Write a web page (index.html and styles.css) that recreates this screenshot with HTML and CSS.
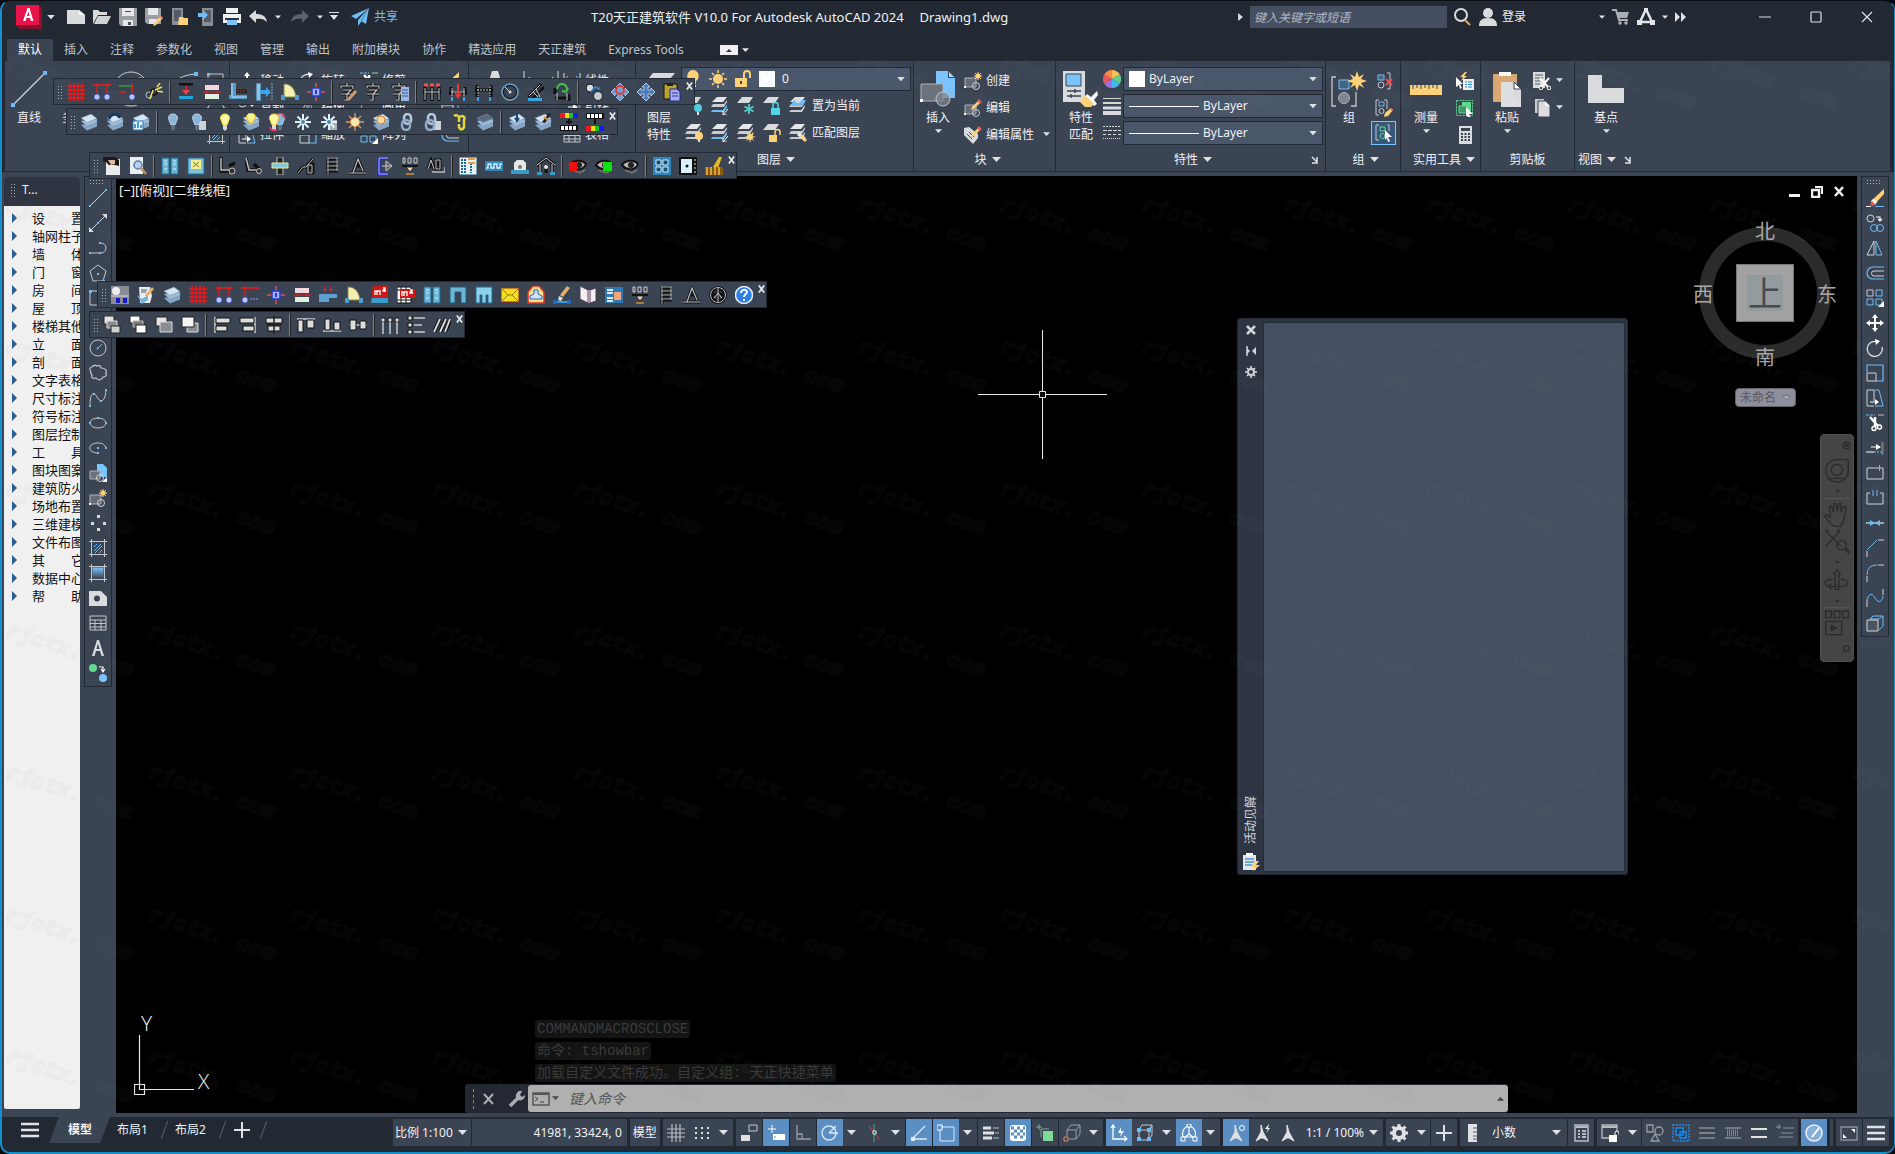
FILE: index.html
```html
<!DOCTYPE html>
<html lang="zh-CN">
<head>
<meta charset="utf-8">
<title>T20天正建筑软件 V10.0 For Autodesk AutoCAD 2024</title>
<link rel="stylesheet" href="styles.css">
</head>
<body>
<svg class="defs" aria-hidden="true">
<defs>
<linearGradient id="gb" x1="0" y1="0" x2="0" y2="1"><stop offset="0" stop-color="#7bc4ff"/><stop offset="1" stop-color="#3b4453"/></linearGradient>
<pattern id="wm" x="0" y="39" width="142" height="142" patternUnits="userSpaceOnUse"><text class="wm-text" x="3" y="28" transform="rotate(18 3 28)">rjctx. com</text></pattern>
</defs>
<!-- generic -->
<symbol id="dn" viewBox="0 0 9 6"><path d="M0 0h9L4.500 5z" fill="#dfe1e4"/></symbol>
<symbol id="x" viewBox="0 0 8 8"><path d="M1 0l6 8M7 0l-6 8" stroke="#e6e8ea" stroke-width="2"/></symbol>
<symbol id="corner" viewBox="0 0 8 8"><path d="M1 1l5 5M6 1v6H1" stroke="#dfe1e4" stroke-width="1.500" fill="none"/></symbol>
<!-- title bar -->
<symbol id="logo" viewBox="0 0 28 26"><path d="M1 1h23l3 3v21H4l-3-4z" fill="#8c0f2c"/><path d="M1 1h23v20H1z" fill="#e8134a"/><path d="M12.500 4L8 17h2.500l1-3h3.500l1 3h2.500L14.500 4zM12 12l1.300-4.500L14.700 12z" fill="#fff"/></symbol>
<symbol id="new" viewBox="0 0 18 18"><path d="M0 2h12l6 5v9H0z" fill="#d9dbdd"/><path d="M12 2v5h6z" fill="#f6f6f6"/></symbol>
<symbol id="open" viewBox="0 0 18 18"><path d="M0 16V2h5l2 2h7v3H5z" fill="#d9dbdd"/><path d="M5 8h13l-4 8H1z" fill="#cfd2d5"/></symbol>
<symbol id="save" viewBox="0 0 18 18"><path d="M0 0h18v18H2l-2-2z" fill="#9b9ea2"/><path d="M3 0h12v8H3zM4 12h10v6H4z" fill="#e6e7e8"/><path d="M9 14h3v3H9zM6 3h6v1H6z" fill="#4b525d"/></symbol>
<symbol id="saveas" viewBox="0 0 18 18"><path d="M0 0h16v16H2l-2-2z" fill="#9b9ea2"/><path d="M3 0h10v7H3zM4 11h8v5H4z" fill="#e6e7e8"/><path d="M16 8l2 2-7 7-3 1 1-3z" fill="#ffd27a"/><path d="M16 8l2 2-1 1-2-2z" fill="#e8585f"/></symbol>
<symbol id="mob1" viewBox="0 0 18 18"><path d="M1 0h11v17H1z" fill="#8a8e94"/><path d="M3 2h7v11H3z" fill="#555c68"/><path d="M8 9h4l1 1h4v7H7z" fill="#ffd27a"/></symbol>
<symbol id="mob2" viewBox="0 0 18 18"><path d="M5 0h11v18H5z" fill="#8a8e94"/><path d="M7 2h7v12H7z" fill="#555c68"/><path d="M1 5h5V2l5 5-5 5V9H1z" fill="#6cbcf7"/></symbol>
<symbol id="print" viewBox="0 0 18 18"><path d="M3 0h12v5H3zM0 6h18v9H0z" fill="#f0f1f2"/><path d="M2 10h14v2H2z" fill="#2b3240"/><path d="M4 12h10v5H4z" fill="#7bc4ff"/></symbol>
<symbol id="undo" viewBox="0 0 18 18"><path d="M0 8l7-6v4c6 0 10 2 11 8-3-3-6-4-11-3v4z" fill="#d9dbdd"/></symbol>
<symbol id="redo" viewBox="0 0 18 18"><path d="M18 8l-7-6v4C5 6 1 8 0 14c3-3 6-4 11-3v4z" fill="#5b626d"/></symbol>
<symbol id="cust" viewBox="0 0 10 10"><path d="M0 0h10v1H0zM1 3h8L5 8z" fill="#dfe1e4"/></symbol>
<symbol id="plane" viewBox="0 0 18 18"><path d="M18 0L0 8l5 3zM18 0l-3 16-5-3zM18 0L7 12v6l3-4z" fill="#6cbcf7"/></symbol>
<symbol id="tri-r" viewBox="0 0 6 10"><path d="M0 0l6 5-6 5z" fill="#dfe1e4"/></symbol>
<symbol id="mag" viewBox="0 0 18 18"><circle cx="7" cy="7" r="6" fill="none" stroke="#d9dbdd" stroke-width="2"/><path d="M11 12l5 5" stroke="#d9a871" stroke-width="2"/></symbol>
<symbol id="user" viewBox="0 0 18 18"><circle cx="9" cy="5" r="5" fill="#d9dbdd"/><path d="M0 18c0-5 2-8 9-8s9 3 9 8z" fill="#d9dbdd"/></symbol>
<symbol id="cart" viewBox="0 0 18 18"><path d="M0 2h4l3 10h9" fill="none" stroke="#aaaeb4" stroke-width="2"/><path d="M4 4h13l-2 6H6z" fill="#aaaeb4"/><circle cx="8" cy="15" r="1.800" fill="#aaaeb4"/><circle cx="14" cy="15" r="1.800" fill="#aaaeb4"/></symbol>
<symbol id="adsk" viewBox="0 0 18 18"><path d="M9 1l6 13H3z" fill="none" stroke="#e4e5e7" stroke-width="2.500"/><path d="M0 12h5v5H0zM13 12h5v5h-5zM7 0h4v4H7z" fill="#e4e5e7"/></symbol>
<symbol id="ff" viewBox="0 0 12 10"><path d="M0 0l5 5-5 5zM6 0l5 5-5 5z" fill="#dfe1e4"/></symbol>
<symbol id="wmin" viewBox="0 0 12 12"><path d="M0 6h12" stroke="#dfe1e4" stroke-width="1.200"/></symbol>
<symbol id="wmax" viewBox="0 0 12 12"><rect x="1" y="1" width="10" height="10" rx="1" fill="none" stroke="#dfe1e4" stroke-width="1.200"/></symbol>
<symbol id="wclose" viewBox="0 0 12 12"><path d="M1 1l10 10M11 1L1 11" stroke="#dfe1e4" stroke-width="1.200"/></symbol>
<symbol id="ribmin" viewBox="0 0 18 10"><path d="M0 0h18v10H0z" fill="#f0f0f0"/><path d="M6 7h6L9 4z" fill="#333"/></symbol>
<!-- ribbon -->
<symbol id="r-line" viewBox="0 0 36 36"><path d="M3 33L33 3" stroke="#d0d3d7" stroke-width="1.300"/><path d="M0 32h4v4H0zM32 0h4v4h-4z" fill="#6cbcf7"/></symbol>
<symbol id="r-pline" viewBox="0 0 36 36"><path d="M2 30h20a10 10 0 0 0 0-20H10" fill="none" stroke="#d0d3d7" stroke-width="1.300"/><path d="M22 8h4v4h-4z" fill="#6cbcf7"/></symbol>
<symbol id="r-circle" viewBox="0 0 36 36"><circle cx="18" cy="18" r="17" fill="none" stroke="#d0d3d7"/><path d="M18 18l9-9M25 7h4v4h-4z" stroke="#6cbcf7" fill="#6cbcf7"/></symbol>
<symbol id="r-arc" viewBox="0 0 36 36"><path d="M2 34Q4 4 32 3" fill="none" stroke="#d0d3d7"/><path d="M30 1h4v4h-4z" fill="#6cbcf7"/></symbol>
<symbol id="rect" viewBox="0 0 18 18"><path d="M1 2h15v14H1z" fill="none" stroke="#c4c8cd"/><path d="M0 1h3v3H0zM15 14h3v3h-3z" fill="#6cbcf7"/></symbol>
<symbol id="hatchS" viewBox="0 0 18 18"><path d="M2.500 0v18M15.500 0v18M0 2.500h18M0 15.500h18" stroke="#c4c8cd"/><path d="M5 8l3-3M5 12l7-7M6 14l7-7M10 14l3-3" stroke="#6cbcf7"/></symbol>
<symbol id="copyS" viewBox="0 0 18 18"><circle cx="4.500" cy="4.500" r="3.500" fill="none" stroke="#d9dbdd"/><circle cx="8" cy="14" r="3.500" fill="none" stroke="#6cbcf7"/><circle cx="14" cy="14" r="3.500" fill="none" stroke="#6cbcf7"/><path d="M10 3h4v4M12 5l2 2 2-2" fill="none" stroke="#fff" stroke-width="1.200"/></symbol>
<symbol id="move" viewBox="0 0 18 18"><path d="M9 1v16M1 9h16" stroke="#fff" stroke-width="2"/><path d="M9 0l3 4H6zM9 18l3-4H6zM0 9l4-3v6zM18 9l-4-3v6z" fill="#fff"/></symbol>
<symbol id="rotate" viewBox="0 0 18 18"><path d="M16 8A7.500 7.500 0 1 1 10 2.500" fill="none" stroke="#e0e2e4" stroke-width="1.300"/><path d="M9 0l5 2-4 4z" fill="#fff"/></symbol>
<symbol id="trim" viewBox="0 0 18 18"><path d="M0 1h9" stroke="#6cbcf7" stroke-dasharray="3 1"/><path d="M12 1h6" stroke="#bbb"/><path d="M4 3l8 9M9 3v9" stroke="#fff" stroke-width="2.500"/><circle cx="8" cy="14.500" r="2" fill="none" stroke="#fff" stroke-width="1.500"/><circle cx="13.500" cy="13" r="2" fill="none" stroke="#fff" stroke-width="1.500"/></symbol>
<symbol id="mirror" viewBox="0 0 18 18"><path d="M8 2v14H1z" fill="none" stroke="#d0d3d7"/><path d="M10 2v14h6z" fill="none" stroke="#6cbcf7"/></symbol>
<symbol id="scale" viewBox="0 0 18 18"><path d="M1 8V1h16v16h-8" fill="none" stroke="#6cbcf7" stroke-width="1.200"/><path d="M1 9h9v8H1z" fill="none" stroke="#d0d3d7"/></symbol>
<symbol id="stretch" viewBox="0 0 18 18"><path d="M8 17H1V1h7v11" fill="none" stroke="#d0d3d7"/><path d="M9 1h4l4 16H9" fill="none" stroke="#6cbcf7"/><path d="M4 13h7" stroke="#fff"/><path d="M9 10l4 3-4 3z" fill="#fff"/></symbol>
<symbol id="array" viewBox="0 0 18 18"><path d="M1 1h6v6H1z" fill="none" stroke="#c4c8cd"/><path d="M10 1h6v6h-6zM1 10h6v6H1zM10 10h6v6h-6z" fill="none" stroke="#6cbcf7"/><path d="M18 12v6h-6z" fill="#fff"/></symbol>
<symbol id="offset" viewBox="0 0 18 18"><path d="M18 3H7a6 6 0 0 0 0 12h11" fill="none" stroke="#6cbcf7" stroke-width="1.200"/><path d="M18 7H8a2 2 0 0 0 0 5h10" fill="none" stroke="#d0d3d7"/></symbol>
<symbol id="erase" viewBox="0 0 18 18"><path d="M18 0v5L9 15l-4-3z" fill="#ffd27a"/><path d="M7 10l4 3-2 3-4-3z" fill="#fff"/><path d="M6 12l3 3-2 2-3-1z" fill="#e8585f"/><path d="M0 17.500h5" stroke="#fff"/><path d="M9 17.500h9" stroke="#6cbcf7"/></symbol>
<symbol id="dim" viewBox="0 0 36 18"><path d="M1 0v18M35 0v18M2 9h32" stroke="#d9dbdd"/><path d="M1 9l6-3v6zM35 9l-6-3v6z" fill="#fff"/></symbol>
<symbol id="dimS" viewBox="0 0 18 18"><path d="M1 1v16M17 1v16" stroke="#d9dbdd"/><path d="M2 7h14M2 7l3-3M2 7l3 3M16 7l-3-3M16 7l-3 3" stroke="#6cbcf7" fill="none"/></symbol>
<symbol id="table" viewBox="0 0 18 18"><path d="M1 2h16v14H1zM1 6h16M1 9.500h16M1 13h16M6 6v10M12 6v10" fill="none" stroke="#c4c8cd"/></symbol>
<symbol id="bigA" viewBox="0 0 24 30"><path d="M0 30L9 0h6l9 30h-5l-2-8H7l-2 8z" fill="#d9dbdd"/></symbol>
<symbol id="lay-big" viewBox="0 0 36 36"><path d="M12 2h22l-10 12H2z" fill="#d9dbdd"/><path d="M2 18h22l8-10" fill="none" stroke="#aeb3ba" stroke-width="3"/><path d="M2 26h22l8-10" fill="none" stroke="#8d939c" stroke-width="3"/></symbol>
<symbol id="bulbY" viewBox="0 0 18 18"><path d="M9 0a6 6 0 0 1 3 11v3H6v-3A6 6 0 0 1 9 0z" fill="#ffd27a"/><path d="M6 15h6v2H6z" fill="#d9dbdd"/></symbol>
<symbol id="sunY" viewBox="0 0 18 18"><circle cx="9" cy="9" r="5" fill="#ffd27a"/><path d="M9 0v3M9 15v3M0 9h3M15 9h3M3 3l2 2M13 13l2 2M15 3l-2 2M5 13l-2 2" stroke="#ffd27a" stroke-width="1.500"/></symbol>
<symbol id="lockY" viewBox="0 0 18 18"><path d="M1 8h12v9H1z" fill="#ffd27a"/><path d="M10 8V4a3 3 0 0 1 6 0v4" fill="none" stroke="#ffd27a" stroke-width="2"/><path d="M7 11v3" stroke="#3b4453" stroke-width="2"/></symbol>
<symbol id="lbase" viewBox="0 0 18 18"><path d="M5 0h11l-4 6H0z" fill="#d9dbdd"/></symbol>
<symbol id="lstack" viewBox="0 0 18 18"><path d="M6 0h10l-4 5H1z" fill="#e4e6e8"/><path d="M2 7h11l3-4v2l-3 5H0z" fill="#c9ccd0"/><path d="M2 13h10l4-5v2l-3 5H0z" fill="#c9ccd0"/></symbol>
<symbol id="l-off" viewBox="0 0 18 18"><use href="#lbase"/><circle cx="13" cy="11" r="4" fill="#4fd0e0"/><path d="M12 15h2v3h-2z" fill="#ddd"/></symbol>
<symbol id="l-iso" viewBox="0 0 18 18"><use href="#lstack"/><path d="M2 13h10l4-5v2l-3 5H0z" fill="#6cbcf7"/><path d="M17 12l-5 6M12 14v4h4" stroke="#fff" fill="none"/></symbol>
<symbol id="l-frz" viewBox="0 0 18 18"><use href="#lbase"/><path d="M12 7v10M7.500 9.500l9 5M16.500 9.500l-9 5" stroke="#4fd0c8" stroke-width="1.800"/></symbol>
<symbol id="l-lock" viewBox="0 0 18 18"><use href="#lbase"/><path d="M8 11h9v7H8z" fill="#55d4e4"/><path d="M10 11V8a2 2 0 0 1 5 0v3" fill="none" stroke="#55d4e4" stroke-width="1.500"/></symbol>
<symbol id="l-cur" viewBox="0 0 18 18"><use href="#lstack"/><path d="M5 3h12l-4 6H1z" fill="#6cbcf7"/><circle cx="9" cy="3" r="3" fill="#d9dbdd"/></symbol>
<symbol id="l-on" viewBox="0 0 18 18"><use href="#lstack"/><circle cx="14" cy="12" r="4" fill="#ffd27a"/><path d="M13 15h2v3h-2z" fill="#ddd"/></symbol>
<symbol id="l-thaw" viewBox="0 0 18 18"><use href="#lstack"/><circle cx="13" cy="13" r="3" fill="#ffd27a"/><path d="M13 8v10M8 13h10M9.500 9.500l7 7M16.500 9.500l-7 7" stroke="#ffd27a"/></symbol>
<symbol id="l-unl" viewBox="0 0 18 18"><use href="#lbase"/><path d="M6 11h8v7H6z" fill="#ffd27a"/><path d="M12 11V8a2 2 0 0 1 5 0v3" fill="none" stroke="#ffd27a" stroke-width="1.500"/></symbol>
<symbol id="l-mat" viewBox="0 0 18 18"><use href="#lstack"/><path d="M10 8l7 6-2 3-7-6z" fill="#e4e6e8"/><path d="M13 11l5 5-2 2-5-5z" fill="#ffd27a"/></symbol>
<symbol id="b-ins" viewBox="0 0 36 36"><path d="M16 0h12l7 7v20H16z" fill="#7bc4ff"/><path d="M28 0v7h7z" fill="#3b4453"/><path d="M29 1l5 5h-5z" fill="#a9daff"/><path d="M1 13h22v17H1z" fill="#6d737d" stroke="#aeb3ba"/><circle cx="23" cy="28" r="7" fill="#7f868f" fill-opacity=".7" stroke="#c4c8cd"/><path d="M0 28h3v3H0z" fill="#fff"/></symbol>
<symbol id="b-cre" viewBox="0 0 18 18"><path d="M1 6h11v9H1z" fill="#656c77" stroke="#aeb3ba"/><circle cx="12" cy="14" r="3.500" fill="none" stroke="#d0d3d7"/><circle cx="14" cy="4" r="2.500" fill="#ffd27a"/><path d="M14 0v8M10 4h8M11 1l6 6M17 1l-6 6" stroke="#ffd27a"/><path d="M0 14h2v2H0z" fill="#fff"/></symbol>
<symbol id="b-edt" viewBox="0 0 18 18"><path d="M1 6h11v9H1z" fill="#656c77" stroke="#aeb3ba"/><circle cx="12" cy="14" r="3.500" fill="none" stroke="#d0d3d7"/><path d="M15 1l2 2-7 7-3 1 1-3z" fill="#ffd27a"/><path d="M15 0l3 3-2 2-3-3z" fill="#e8585f"/><path d="M0 14h2v2H0z" fill="#fff"/></symbol>
<symbol id="b-att" viewBox="0 0 18 18"><path d="M0 2l5-1 9 7v4l-5 6-9-9z" fill="#d9dbdd"/><path d="M3 8l5 5M5 6l5 5" stroke="#3b4453"/><path d="M15 1l2 2-7 7-3 1 1-3z" fill="#ffd27a"/><path d="M15 0l3 3-2 2-3-3z" fill="#e8585f"/></symbol>
<symbol id="p-mat" viewBox="0 0 36 36"><path d="M0 0h22v31H0z" fill="#d9dbdd"/><path d="M3 3h15v12H3z" fill="#7bc4ff" stroke="#3b4453"/><path d="M4 20h14M4 25h14M12 18v4M8 23v4" stroke="#3b4453" stroke-width="1.500"/><path d="M34 20l-6 6-4-3-2 3 9 9 3-2-3-4 4-5z" fill="#fff"/><path d="M22 24l9 9-3 3H22l-5-5z" fill="#ffd27a"/></symbol>
<symbol id="p-col" viewBox="0 0 18 18"><path d="M9 9V0a9 9 0 0 1 7.800 4.500z" fill="#f9c04d"/><path d="M9 9l7.800-4.500a9 9 0 0 1 0 9z" fill="#5fd08f"/><path d="M9 9l7.800 4.500A9 9 0 0 1 9 18z" fill="#46b8e8"/><path d="M9 9v9a9 9 0 0 1-7.800-4.500z" fill="#a06ee0"/><path d="M9 9l-7.800 4.500a9 9 0 0 1 0-9z" fill="#e8585f"/><path d="M9 9L1.200 4.500A9 9 0 0 1 9 0z" fill="#f58a4a"/></symbol>
<symbol id="p-lw" viewBox="0 0 18 18"><path d="M0 1.500h18" stroke="#d9dbdd"/><path d="M0 6h18" stroke="#d9dbdd" stroke-width="2"/><path d="M0 11h18" stroke="#d9dbdd" stroke-width="3"/><path d="M0 16h18" stroke="#d9dbdd" stroke-width="4"/></symbol>
<symbol id="p-lt" viewBox="0 0 18 18"><path d="M0 2.500h18" stroke="#d9dbdd" stroke-dasharray="2 1"/><path d="M0 6.500h18" stroke="#d9dbdd" stroke-dasharray="4 1"/><path d="M0 10.500h18" stroke="#d9dbdd" stroke-dasharray="3 2"/><path d="M0 14.500h18" stroke="#d9dbdd" stroke-dasharray="1 1"/></symbol>
<symbol id="g-big" viewBox="0 0 36 36"><path d="M5 6H1v29h4M20 35h5V21" fill="none" stroke="#c4c8cd" stroke-width="1.300"/><path d="M8 9h10v9H8z" fill="#46647f" stroke="#6cbcf7"/><circle cx="13" cy="27" r="5.500" fill="#7f868f" stroke="#aeb3ba"/><path d="M26 0l2 6 5-3-3 5 6 2-6 2 3 5-5-3-2 6-2-6-5 3 3-5-6-2 6-2-3-5 5 3z" fill="#ffd27a"/></symbol>
<symbol id="g-un" viewBox="0 0 18 18"><path d="M12 1h3v16h-3" fill="none" stroke="#c4c8cd"/><path d="M3 3h6v5H3z" fill="#46647f" stroke="#6cbcf7"/><circle cx="6" cy="13" r="3" fill="none" stroke="#c4c8cd"/><path d="M11 7l6 6M17 7l-6 6" stroke="#f0504f" stroke-width="2"/></symbol>
<symbol id="g-ed" viewBox="0 0 18 18"><path d="M4 1H1v15h3M9 1h3v9" fill="none" stroke="#c4c8cd"/><path d="M4 3h5v4H4z" fill="none" stroke="#6cbcf7"/><circle cx="6.500" cy="12" r="2.500" fill="none" stroke="#c4c8cd"/><path d="M16 9l2 2-5 6-4 1 1-4z" fill="#ffd27a"/><path d="M16 9l2 2-1 1-2-2z" fill="#e8585f"/></symbol>
<symbol id="g-sel" viewBox="0 0 18 18"><path d="M4 1H1v15h3M12 1h2v6" fill="none" stroke="#c4c8cd"/><path d="M5 3h5v4H5z" fill="none" stroke="#62d991"/><circle cx="7.500" cy="12" r="2.500" fill="none" stroke="#62d991"/><path d="M10 6l7 7h-4l2 4-2 1-1-4-2 2z" fill="#fff"/></symbol>
<symbol id="u-meas" viewBox="0 0 36 36"><path d="M2 14h32v10H2z" fill="#ffd27a"/><path d="M5 14v4M9 14v3M13 14v4M17 14v3M21 14v4M25 14v3M29 14v4" stroke="#3b4453"/></symbol>
<symbol id="u-sel" viewBox="0 0 18 18"><path d="M7 7h11v11H7z" fill="#f0f1f2"/><path d="M9 10h2M9 12.500h2M9 15h2M12 10h4M12 12.500h4M12 15h4" stroke="#2b86d0"/><path d="M9 0L4 5h3L5 9l6-5H8l3-4z" fill="#ffd27a"/><path d="M0 5l7 7H4l2 4-2 1-1-4-3 2z" fill="#fff"/></symbol>
<symbol id="u-all" viewBox="0 0 18 18"><path d="M.5 1.500h16v15H.5z" fill="none" stroke="#62d991" stroke-dasharray="2 1"/><path d="M6 3h9v9H6z" fill="#62d991"/><path d="M3 7h8v7H3z" fill="#3a9a60" stroke="#62d991"/><path d="M10 8l7 7h-4l2 3h-3l-2-2z" fill="#fff"/></symbol>
<symbol id="u-calc" viewBox="0 0 18 18"><path d="M3 0h13v18H3z" fill="#d9dbdd"/><path d="M5 2h9v3H5z" fill="#3b4453"/><path d="M5 8h9M5 11h9M5 14h9" stroke="#3b4453" stroke-width="2" stroke-dasharray="2 1.500"/></symbol>
<symbol id="c-paste" viewBox="0 0 36 36"><path d="M4 3h24v28H4z" fill="#d9a871"/><path d="M10 1h12v4H10z" fill="#fff"/><path d="M12 11h13l7 7v18H12z" fill="#dcdee0"/><path d="M25 11v7h7z" fill="#fff" stroke="#3b4453"/></symbol>
<symbol id="c-cut" viewBox="0 0 18 18"><path d="M0 0h12v16H0z" fill="#d9dbdd"/><path d="M2 3h8M2 6h8M2 9h5M2 12h5" stroke="#555c68"/><path d="M7 6l8 9M16 6l-8 9" stroke="#fff" stroke-width="2"/><circle cx="8" cy="16" r="1.800" fill="#3b4453" stroke="#fff"/><circle cx="16" cy="16" r="1.800" fill="#3b4453" stroke="#fff"/></symbol>
<symbol id="c-copy" viewBox="0 0 18 18"><path d="M2 0h9v14H2z" fill="#c9ccd0"/><path d="M5 2h7l5 5v11H5z" fill="#dcdee0" stroke="#3b4453"/><path d="M12 2v5h5z" fill="#fff"/></symbol>
<symbol id="v-base" viewBox="0 0 36 36"><path d="M0 4h14v13h22v15H0z" fill="#d9dbdd"/></symbol>
<!-- draw toolbar -->
<symbol id="d-line" viewBox="0 0 18 18"><path d="M1 17L17 1" stroke="#d0d3d7"/><path d="M0 16h2v2H0zM16 0h2v2h-2z" fill="#6cbcf7"/></symbol>
<symbol id="d-xl" viewBox="0 0 18 18"><path d="M1 17L17 1" stroke="#d0d3d7"/><path d="M0 18v-5l5 5zM18 0v5l-5-5z" fill="#d9dbdd"/><path d="M8 8h2v2H8z" fill="#6cbcf7"/></symbol>
<symbol id="d-pl" viewBox="0 0 18 18"><path d="M1 14h11a4.500 4.500 0 0 0 0-10" fill="none" stroke="#c4c8cd"/><path d="M0 13h2v2H0zM10 13h2v2h-2zM10 3h2v2h-2z" fill="#6cbcf7"/></symbol>
<symbol id="d-poly" viewBox="0 0 18 18"><path d="M9 1l8 6-3 10H4L1 7z" fill="none" stroke="#c4c8cd"/><path d="M8 9h2v2H8zM14 16h2v2h-2z" fill="#6cbcf7"/></symbol>
<symbol id="d-arc" viewBox="0 0 18 18"><path d="M2 17Q2 3 16 2" fill="none" stroke="#c4c8cd"/><path d="M1 16h2v2H1zM15 1h2v2h-2zM5 6h2v2H5z" fill="#6cbcf7"/></symbol>
<symbol id="d-cir" viewBox="0 0 18 18"><circle cx="9" cy="9" r="8" fill="none" stroke="#c4c8cd"/><path d="M9 9l4-4M8 9h1v1H8z" stroke="#6cbcf7"/></symbol>
<symbol id="d-cloud" viewBox="0 0 18 18"><path d="M2 8C0 5 1 3 3 3c1-2 4-2 5-1 2-1 4 0 4 2 4 0 6 2 5 5 1 3-1 4-3 4-1 3-5 4-7 1-3 1-5 0-4-3-1-1-2-2-1-3z" fill="none" stroke="#c4c8cd" stroke-width="1.200"/></symbol>
<symbol id="d-spl" viewBox="0 0 18 18"><path d="M1 16C1 4 5 2 8 8s8 6 9-7" fill="none" stroke="#c4c8cd"/><path d="M0 16h2v2H0zM4 4h2v2H4zM11 11h2v2h-2zM16 0h2v2h-2z" fill="#6cbcf7"/></symbol>
<symbol id="d-ell" viewBox="0 0 18 18"><ellipse cx="9" cy="9" rx="8" ry="5" fill="none" stroke="#c4c8cd"/><path d="M0 8h2v2H0zM16 8h2v2h-2zM8 3h2v2H8z" fill="#6cbcf7"/></symbol>
<symbol id="d-ela" viewBox="0 0 18 18"><path d="M9 14C-2 14-2 4 9 4c5 0 7 2 8 5" fill="none" stroke="#c4c8cd"/><path d="M16 8h2v2h-2zM8 8h2v2H8zM8 13h2v2H8z" fill="#6cbcf7"/></symbol>
<symbol id="d-ins" viewBox="0 0 18 18"><path d="M8 0h6l4 4v9H8z" fill="#7bc4ff"/><path d="M1 7h10v8H1z" fill="#6d737d" stroke="#aeb3ba"/><circle cx="11" cy="14" r="3.500" fill="none" stroke="#d0d3d7"/><path d="M18 13v5h-5z" fill="#fff"/></symbol>
<symbol id="d-pt" viewBox="0 0 18 18"><path d="M8 1h3v3H8zM2 8h3v3H2zM14 8h3v3h-3zM8 14h3v3H8z" fill="#d9dbdd"/></symbol>
<symbol id="d-grad" viewBox="0 0 18 18"><path d="M3.500 3.500h11v11h-11z" fill="url(#gb)"/><path d="M2.500 0v18M15.500 0v18M0 2.500h18M0 15.500h18" stroke="#c4c8cd"/></symbol>
<symbol id="d-reg" viewBox="0 0 18 18"><path d="M0 2h12l6 6v9H0z" fill="#d9dbdd"/><circle cx="8" cy="9.500" r="3" fill="#3b4453"/></symbol>
<symbol id="d-A" viewBox="0 0 18 18"><path d="M3 17L8 1h2l5 16h-2.500l-1.500-5H7l-1.500 5zM7.500 10h3L9 4.500z" fill="#d9dbdd"/></symbol>
<symbol id="d-sel" viewBox="0 0 18 18"><circle cx="4" cy="4" r="4" fill="#62d991"/><circle cx="14" cy="14" r="4" fill="#7bc4ff"/><path d="M10 3h4v4M12 5l2 3 2-3" fill="none" stroke="#fff" stroke-width="1.200"/></symbol>
<!-- modify toolbar -->
<symbol id="m-ext" viewBox="0 0 18 18"><path d="M0 13h8" stroke="#fff"/><path d="M8 13h8" stroke="#6cbcf7" stroke-dasharray="2 1"/><path d="M5 8h7" stroke="#fff"/><path d="M10 5l5 3-5 3z" fill="#fff"/><path d="M16.500 3v13" stroke="#777d87" stroke-width="2"/></symbol>
<symbol id="m-brk1" viewBox="0 0 18 18"><path d="M1 4h16v11H1z" fill="none" stroke="#d0d3d7"/><path d="M13.500 1v6" stroke="#6cbcf7"/></symbol>
<symbol id="m-brk2" viewBox="0 0 18 18"><path d="M4 4H1v11h16V4h-3" fill="none" stroke="#d0d3d7"/><path d="M7 1v6M11 1v6" stroke="#6cbcf7"/></symbol>
<symbol id="m-join" viewBox="0 0 18 18"><path d="M0 9h18" stroke="#fff"/><path d="M4 6l5 3-5 3zM14 6L9 9l5 3z" fill="#6cbcf7"/></symbol>
<symbol id="m-cha" viewBox="0 0 18 18"><path d="M1 18v-6M12 1h6" stroke="#d0d3d7"/><path d="M1 11L11 1" stroke="#6cbcf7"/></symbol>
<symbol id="m-fil" viewBox="0 0 18 18"><path d="M1 18v-6M12 1h6" stroke="#d0d3d7"/><path d="M1 11Q1 1 11 1" fill="none" stroke="#6cbcf7"/></symbol>
<symbol id="m-bld" viewBox="0 0 18 18"><path d="M1 18v-7M17 0v6" stroke="#d0d3d7"/><path d="M1 11c2-8 6-6 8-2s7 6 8-2" fill="none" stroke="#6cbcf7"/></symbol>
<symbol id="m-exp" viewBox="0 0 18 18"><path d="M4 5l3-3h10v10l-4 4M13 5l4-3M13 5H4v0" fill="none" stroke="#6cbcf7"/><path d="M1 6h11v11H1z" fill="#4b535f" stroke="#d9dbdd"/></symbol>
<!-- floating toolbars -->
<symbol id="grid" viewBox="0 0 18 18"><path d="M3 0v18M7 0v18M11 0v18M15 0v18M0 3h18M0 7h18M0 11h18M0 15h18" stroke="#f01818" stroke-width="1.500"/></symbol>
<symbol id="axis" viewBox="0 0 18 18"><path d="M0 2h18M4 0v11M14 0v11" stroke="#f01818" stroke-width="1.300"/><circle cx="4" cy="14" r="3.200" fill="#b8c6ff" stroke="#2a3c8f"/><circle cx="14" cy="14" r="3.200" fill="#b8c6ff" stroke="#2a3c8f"/></symbol>
<symbol id="axis1" viewBox="0 0 18 18"><path d="M0 2h18M4 0v11" stroke="#f01818" stroke-width="1.300"/><circle cx="4" cy="14" r="3.200" fill="#b8c6ff" stroke="#2a3c8f"/><path d="M9 13h9" stroke="#8ea0ff" stroke-dasharray="2 1"/></symbol>
<symbol id="axis2" viewBox="0 0 18 18"><path d="M0 3h14" stroke="#37c037"/><path d="M13 0v11M0 9h7" stroke="#f01818" stroke-width="1.500"/><circle cx="13" cy="14" r="3.200" fill="#b8c6ff" stroke="#2a3c8f"/></symbol>
<symbol id="axis3" viewBox="0 0 18 18"><circle cx="4" cy="12" r="3" fill="none" stroke="#bbb"/><circle cx="9" cy="9" r="3" fill="none" stroke="#111" stroke-width="1.500"/><path d="M5 16l3-9M10 7l7-3M12 4l3-4M12 8l6 1" stroke="#e6e36a" stroke-width="1.500"/></symbol>
<symbol id="w1" viewBox="0 0 18 18"><path d="M2 1h14" stroke="#111" stroke-width="3"/><path d="M9 3v7" stroke="#e02020" stroke-width="2"/><path d="M9 12L5 7h8z" fill="#e04848"/><path d="M2 13h14v3H2z" fill="#1ca8d8"/></symbol>
<symbol id="w2" viewBox="0 0 18 18"><path d="M2 2h14v5H2z" fill="#f4d8e0"/><path d="M2 11h14v5H2z" fill="#dff2df"/><path d="M0 9h18" stroke="#e02020"/><path d="M4 7v4M14 7v4" stroke="#e02020"/></symbol>
<symbol id="w3" viewBox="0 0 18 18"><path d="M2 0h5v15H2zM0 12h18v4H0z" fill="#4f9ccf"/><path d="M7 8h11" stroke="#222" stroke-width="4"/><path d="M3 0v14h15" stroke="#bfe3f8" fill="none"/><path d="M8 8h8" stroke="#e02020" stroke-dasharray="2 1"/></symbol>
<symbol id="w4" viewBox="0 0 18 18"><path d="M1 0h5v18H1z" fill="#8fc5e8" stroke="#265a80"/><path d="M5 7h6V4l5 5-5 5v-3H5z" fill="#39a6ea"/><path d="M17 0v18" stroke="#7fb3d8" stroke-dasharray="2 1"/></symbol>
<symbol id="door" viewBox="0 0 18 18"><path d="M3 1c7 0 11 5 12 13H3z" fill="#f5efb0" stroke="#8c8850"/><path d="M0 12h4v5H0zM14 12h4v5h-4z" fill="#4f9ccf"/></symbol>
<symbol id="col" viewBox="0 0 18 18"><path d="M9 0v18M0 9h18" stroke="#e0524f" stroke-width="1.500"/><path d="M5 5h8v8H5z" fill="#9fb6ff" stroke="#2438c8" stroke-width="1.500"/><path d="M9 7v4" stroke="#2438c8" stroke-width="2"/></symbol>
<symbol id="t-zi" viewBox="0 0 18 18"><path d="M2 5V3h12v3M8 0v3M4 7h8l-4 4v6H5M2 11h12" fill="none" stroke="#111" stroke-width="3"/><path d="M2 5V3h12v3M8 0v3M4 7h8l-4 4v6H5M2 11h12" fill="none" stroke="#c8c8c8" stroke-width="1.200"/></symbol>
<symbol id="t-zi2" viewBox="0 0 18 18"><use href="#t-zi"/><path d="M9 15l7-8 2 2-7 8-3 1z" fill="#d89a6a"/></symbol>
<symbol id="t-zi3" viewBox="0 0 18 18"><use href="#t-zi"/><path d="M10 4h8v14h-8z" fill="#9db8e0"/><path d="M11 7h6M11 10h6M11 13h6" stroke="#345a9a"/></symbol>
<symbol id="dm1" viewBox="0 0 18 18"><path d="M2 3v15M9 3v15M16 3v15M0 9h18" stroke="#0c0c0c" stroke-width="3"/><path d="M2 5v12M9 5v12M16 5v12M2 9h14" stroke="#c8c8c8"/><path d="M1 2h16" stroke="#f05050" stroke-width="3" stroke-dasharray="4 2"/></symbol>
<symbol id="dm2" viewBox="0 0 18 18"><path d="M2 4v8M16 4v8M0 10h18" stroke="#0c0c0c" stroke-width="3"/><path d="M3 5v8M15 5v8M2 9h14" stroke="#c8c8c8"/><path d="M9 1v13M6 10l3 4 3-4" stroke="#e83838" stroke-width="2" fill="none"/><path d="M3 14v4M15 14v4" stroke="#39a6ea" stroke-width="2"/></symbol>
<symbol id="dm3" viewBox="0 0 18 18"><path d="M2 2v12M16 2v12M0 7h18" stroke="#0c0c0c" stroke-width="3"/><path d="M3 3v10M15 3v10M2 7h14" stroke="#c8c8c8" stroke-dasharray="2 1"/><path d="M3 14v4M15 14v4" stroke="#39a6ea" stroke-width="2"/></symbol>
<symbol id="dm4" viewBox="0 0 18 18"><circle cx="9" cy="9" r="8" fill="none" stroke="#6f9fc4" stroke-width="1.500"/><circle cx="9" cy="9" r="6.500" fill="none" stroke="#111"/><path d="M9 9L4 4" stroke="#ddd"/><circle cx="9" cy="9" r="1.500" fill="#ddd"/></symbol>
<symbol id="dm5" viewBox="0 0 18 18"><path d="M1 14L14 1M4 17L17 4" stroke="#111" stroke-width="2.500"/><path d="M2 13L13 2M6 9l5 5M9 6l4 8" stroke="#c8c8c8"/><path d="M1 15h14v3H1z" fill="#39a6ea"/></symbol>
<symbol id="dm6" viewBox="0 0 18 18"><path d="M2 11V5M16 11v7M2 15h14" stroke="#111" stroke-width="3"/><path d="M4 6a5 5 0 1 1 9 3M13 9l-4-1M13 9l2-4" fill="none" stroke="#49c049" stroke-width="2"/><path d="M4 10v7M14 10v7" stroke="#c8c8c8"/></symbol>
<symbol id="ball" viewBox="0 0 18 18"><circle cx="5" cy="5" r="4" fill="#d8dde4" stroke="#111"/><circle cx="13" cy="13" r="4.500" fill="#c3ccd6" stroke="#222"/><path d="M6 9l4-5 5 2" stroke="#3b7fc4" stroke-width="2" fill="none"/></symbol>
<symbol id="mv1" viewBox="0 0 18 18"><path d="M9 0l4 4h-2v3h3V5l4 4-4 4v-2h-3v3h2l-4 4-4-4h2v-3H4v2L0 9l4-4v2h3V4H5z" fill="#6f9fd8" stroke="#cfe0f5" stroke-width=".6"/><circle cx="9" cy="7" r="4" fill="none" stroke="#e03838" stroke-width="2"/></symbol>
<symbol id="mv2" viewBox="0 0 18 18"><path d="M9 0l4 4h-2v3h3V5l4 4-4 4v-2h-3v3h2l-4 4-4-4h2v-3H4v2L0 9l4-4v2h3V4H5z" fill="#4a7fc0" stroke="#cfe0f5" stroke-width=".8"/></symbol>
<symbol id="clip" viewBox="0 0 18 18"><path d="M1 1h13v15H1z" fill="#b7a62a" stroke="#111"/><path d="M4 0h6v3H4z" fill="#222"/><path d="M7 6h7l3 3v9H7z" fill="#a8b0e8" stroke="#20209a"/><path d="M9 10h6M9 13h6" stroke="#3030c0"/></symbol>
<symbol id="ly" viewBox="0 0 18 18"><path d="M1 12l6 5.500 10-4V9z" fill="#86a6c6"/><path d="M1 8l6 5.500 10-4V6z" fill="#9dbbd6" stroke="#6c8aa8" stroke-width=".5"/><path d="M1 5l6 4.500 10-4L11 1z" fill="#d5e4f1" stroke="#6c8aa8" stroke-width=".5"/></symbol>
<symbol id="ly2" viewBox="0 0 18 18"><use href="#ly"/><path d="M3 6c2-6 9-6 11-1" fill="none" stroke="#0d3c66" stroke-width="3"/></symbol>
<symbol id="ly3" viewBox="0 0 18 18"><use href="#ly"/><path d="M1 8h10v9H1z" fill="#e8f3fc" stroke="#1f78c0"/><path d="M3 15v-4M6 15v-6M9 15v-3" stroke="#1f78c0" stroke-width="1.500"/></symbol>
<symbol id="bb" viewBox="0 0 18 18"><path d="M9 1a4 4 0 0 1 4 6l-2 5H7L5 7a4 4 0 0 1 4-6z" fill="#8ab4d8" stroke="#cbdff0" stroke-width=".8"/><path d="M7 12h4v4l-2 2-2-2z" fill="#5b7088"/></symbol>
<symbol id="bb2" viewBox="0 0 18 18"><path d="M9 8h7v9H9z" fill="#cdd2d8"/><use href="#bb" x="-2"/></symbol>
<symbol id="by" viewBox="0 0 18 18"><path d="M9 1a4 4 0 0 1 4 6l-2 5H7L5 7a4 4 0 0 1 4-6z" fill="#fff6a8" stroke="#f0cf3c"/><path d="M7 12h4v4l-2 2-2-2z" fill="#d9d9d9"/></symbol>
<symbol id="by2" viewBox="0 0 18 18"><use href="#ly"/><path d="M9 0a4 4 0 0 1 3 7l-1 3H7L6 7a4 4 0 0 1 3-7z" fill="#fff18a" stroke="#e0b828"/></symbol>
<symbol id="by3" viewBox="0 0 18 18"><use href="#bb" x="3"/><use href="#by" x="-3"/><path d="M9 1c4-2 7 0 7 4M9 17c-4 1-7 0-7-3" stroke="#e83868" stroke-width="2" fill="none"/></symbol>
<symbol id="sn" viewBox="0 0 18 18"><path d="M9 1v16M1 9h16M3.500 3.500l11 11M14.500 3.500l-11 11" stroke="#dff0f8" stroke-width="2"/><circle cx="9" cy="9" r="2" fill="#4a88b0"/></symbol>
<symbol id="sn2" viewBox="0 0 18 18"><path d="M8 7h9v10H8z" fill="#aab2bc"/><use href="#sn"/></symbol>
<symbol id="su" viewBox="0 0 18 18"><path d="M9 0v18M0 9h18M3 3l12 12M15 3L3 15" stroke="#c9a37a" stroke-width="1.300"/><circle cx="9" cy="9" r="4.500" fill="#ffe9b8" stroke="#e8963c"/></symbol>
<symbol id="su2" viewBox="0 0 18 18"><use href="#ly"/><circle cx="9" cy="7" r="4" fill="#ffd9a0" stroke="#d07c28"/></symbol>
<symbol id="lk" viewBox="0 0 18 18"><rect x="6" y="1" width="7" height="10" rx="3.500" fill="none" stroke="#b6cbe0" stroke-width="2.500"/><rect x="4" y="7" width="8" height="10" rx="4" fill="none" stroke="#8faac8" stroke-width="2.500"/></symbol>
<symbol id="lk2" viewBox="0 0 18 18"><path d="M10 8h7v9h-7z" fill="#cdd2d8"/><use href="#lk" x="-2"/></symbol>
<symbol id="lk3" viewBox="0 0 18 18"><path d="M4 3a3 3 0 0 1 5 2v4M9 5c3-4 7-1 5 2v7c-1 3-4 3-5 0v-3" fill="none" stroke="#e2d63c" stroke-width="2.500"/></symbol>
<symbol id="ly4" viewBox="0 0 18 18"><use href="#ly"/><path d="M1 5l6 4.500 10-4L11 1z" fill="#5a6a80"/></symbol>
<symbol id="ly5" viewBox="0 0 18 18"><use href="#ly"/><path d="M9 0v7M7 5l2 3 2-3" stroke="#174a7a" stroke-width="2" fill="none"/></symbol>
<symbol id="ly6" viewBox="0 0 18 18"><use href="#ly"/><path d="M8 9l7-9 2 1-6 9z" fill="#222"/><path d="M10 4l4 3" stroke="#f08c28" stroke-width="2"/></symbol>
<symbol id="pal" viewBox="0 0 18 18"><path d="M0 0h5v5H0z" fill="#f01818"/><path d="M5 0h4v5H5z" fill="#f0e018"/><path d="M9 0h4v5H9z" fill="#18c818"/><path d="M13 0h5v5h-5z" fill="#1818f0"/><path d="M9 6v5M6 9h6" stroke="#111" stroke-width="2"/><path d="M0 12h18v6H0z" fill="#111"/><path d="M1 15h16" stroke="#fff" stroke-width="4" stroke-dasharray="3 1"/></symbol>
<symbol id="pal2" viewBox="0 0 18 18"><path d="M0 0h18v6H0z" fill="#111"/><path d="M1 3h16" stroke="#fff" stroke-width="4" stroke-dasharray="3 1"/><path d="M9 6v5" stroke="#111" stroke-width="2"/><path d="M0 13h5v5H0z" fill="#f01818"/><path d="M5 13h4v5H5z" fill="#f0e018"/><path d="M9 13h4v5H9z" fill="#18c818"/><path d="M13 13h5v5h-5z" fill="#1818f0"/></symbol>
<symbol id="hand" viewBox="0 0 18 18"><path d="M3 2h14v16H3z" fill="#e9e9e9"/><path d="M0 0h12l4 3v6l-4-1H6L3 5 0 4z" fill="#1a1a1a"/><path d="M5 3h7v4l-4 1z" fill="#e0b89c"/></symbol>
<symbol id="pgz" viewBox="0 0 18 18"><path d="M1 0h13v17H1z" fill="#e9eef4"/><circle cx="9" cy="8" r="4" fill="#b7d0ea" stroke="#5a7ca0" stroke-width="1.500"/><path d="M12 11l5 6" stroke="#c09058" stroke-width="2.500"/></symbol>
<symbol id="win" viewBox="0 0 18 18"><path d="M1 1h7v16H1zM10 1h7v16h-7z" fill="#6db6d8" stroke="#1f6a90"/><path d="M3 4h3M3 7h3M12 4h3M12 7h3M3 12h3M12 12h3" stroke="#d6eef8"/></symbol>
<symbol id="winx" viewBox="0 0 18 18"><path d="M1 1h16v16H1z" fill="#7fc0dc" stroke="#1f6a90"/><path d="M4 3h10v9H4z" fill="#f4ef90"/><path d="M6 5l6 5M12 5l-6 5" stroke="#7d7a30"/></symbol>
<symbol id="gl1" viewBox="0 0 18 18"><path d="M2 0v14h8M10 9l6-3" fill="none" stroke="#111" stroke-width="3.500"/><path d="M2 1v12h9" fill="none" stroke="#bdbdbd" stroke-width="1.500"/><circle cx="13" cy="14" r="3" fill="#333" stroke="#bdbdbd"/></symbol>
<symbol id="gl2" viewBox="0 0 18 18"><path d="M1 1l2 12h8M9 7l5 5" fill="none" stroke="#111" stroke-width="3.500"/><path d="M1 1l3 12h7" fill="none" stroke="#bdbdbd" stroke-width="1.500"/><circle cx="14" cy="14" r="2.500" fill="#333" stroke="#bdbdbd"/></symbol>
<symbol id="gl3" viewBox="0 0 18 18"><path d="M6 0h6v18H6z" fill="#222" stroke="#bdbdbd"/><path d="M1 6h16v5H1z" fill="#7fc7d8" stroke="#f0e890"/></symbol>
<symbol id="gl4" viewBox="0 0 18 18"><path d="M1 16l5-6h3l7-8M11 7h5v9h-5zM11 11h5" fill="none" stroke="#111" stroke-width="3"/><path d="M1 16l5-6h3l7-8M11 8h4v8h-4z" fill="none" stroke="#bdbdbd"/></symbol>
<symbol id="gl5" viewBox="0 0 18 18"><path d="M4 2h11M4 6h11M4 10h11M4 14h11M5 1v17" fill="none" stroke="#111" stroke-width="3"/><path d="M4 1h11M4 5h11M4 9h11M4 13h11M5 1v17M14 1v13" fill="none" stroke="#a8a8a8"/></symbol>
<symbol id="gl6" viewBox="0 0 18 18"><path d="M0 16h17M4 16L9 2l5 12M7 9h5" fill="none" stroke="#111" stroke-width="3"/><path d="M0 16h17M4 16L9 2l5 12" fill="none" stroke="#bdbdbd" stroke-width="1.200"/></symbol>
<symbol id="gl7" viewBox="0 0 18 18"><path d="M13 1H4v16h9" fill="none" stroke="#2020d8" stroke-width="3"/><path d="M13 1H4v16h9" fill="none" stroke="#b8c0ff"/><path d="M7 9h9M11 4l6 5-6 5z" fill="#555" stroke="#ccc"/></symbol>
<symbol id="gl8" viewBox="0 0 18 18"><path d="M2 1h2v5H2zM7 1h3v5H7zM13 1h3v5h-3z" fill="none" stroke="#ccc"/><path d="M1 9h16" stroke="#111" stroke-width="2"/><path d="M5 10h8l-4 5z" fill="#e8d8c0" stroke="#222"/><path d="M5 17h8" stroke="#b07838" stroke-width="2"/></symbol>
<symbol id="gl9" viewBox="0 0 18 18"><path d="M1 12l3-9 3 9M2 9h4M9 3h4v9H9zM9 7h5" fill="none" stroke="#111" stroke-width="3"/><path d="M1 12l3-9 3 9M9 3h4v9H9z" fill="none" stroke="#bdbdbd"/><path d="M5 15h13v-5" stroke="#bdbdbd" fill="none" stroke-width="1.500"/></symbol>
<symbol id="bld" viewBox="0 0 18 18"><path d="M0 0h18v18H0z" fill="#e8f0f4" stroke="#14486c"/><path d="M3 2v14M6 2v14M12 6v10" stroke="#1f6a90" stroke-width="2" stroke-dasharray="2 1"/><path d="M9 2h7M9 6h7" stroke="#d8a048" stroke-width="2"/></symbol>
<symbol id="brick" viewBox="0 0 18 18"><path d="M0 4h18v10H0z" fill="#2f86b8"/><path d="M1 11h2V7h3v4h3V7h3v4h3V7h2" stroke="#e4f4fc" fill="none" stroke-width="1.300"/></symbol>
<symbol id="arch" viewBox="0 0 18 18"><path d="M3 13V6l3-3h6l3 3v7z" fill="#e8e8e8"/><circle cx="9" cy="10" r="2" fill="#777"/><path d="M0 13h18v4H0z" fill="#3a9ac8"/></symbol>
<symbol id="house" viewBox="0 0 18 18"><path d="M0 8l9-7 9 7M3 7v11M15 7v11M9 8v8" stroke="#111" fill="none" stroke-width="3"/><path d="M0 8l9-7 9 7M3 7v11M15 7v11" stroke="#d0d0d0" fill="none"/><path d="M0 15h5v3H0zM13 15h5v3h-5z" fill="#3a9ac8"/><circle cx="9" cy="10" r="2" fill="#e8e8e8"/></symbol>
<symbol id="eye" viewBox="0 0 18 18"><path d="M1 8c3-5 12-6 16-1-2 5-10 8-15 2z" fill="#b8b8b8" stroke="#111" stroke-width="2"/><circle cx="10" cy="8" r="3" fill="#222"/><path d="M4 13l7 3 5-3" fill="none" stroke="#777" stroke-width="1.500"/></symbol>
<symbol id="eyeR" viewBox="0 0 18 18"><use href="#eye"/><path d="M0 5h8v9H0z" fill="#f01010"/></symbol>
<symbol id="eyeG" viewBox="0 0 18 18"><use href="#eye"/><path d="M8 5h9v9H8z" fill="#10e010"/></symbol>
<symbol id="ff4" viewBox="0 0 18 18"><path d="M0 0h18v18H0z" fill="#2f86b8"/><path d="M3 3h5v5H3zM10 3h5v5h-5zM3 10h5v5H3zM10 10h5v5h-5z" fill="#155078" stroke="#d6eef8"/></symbol>
<symbol id="note" viewBox="0 0 18 18"><path d="M0 0h18v18H0z" fill="#111"/><path d="M2 2h11v14H2z" fill="#d8f0ff"/><circle cx="8" cy="9" r="1.500" fill="#111"/><path d="M15 3h2M15 7h2M15 11h2M15 15h2" stroke="#ddd"/></symbol>
<symbol id="broom" viewBox="0 0 18 18"><path d="M8 10l6-10h3l-4 11z" fill="#e8b820"/><path d="M0 10h18v8H0z" fill="#8a5a10"/><path d="M2 10v8M6 10v8M10 10v8M14 10v8" stroke="#f0c040" stroke-width="1.500"/></symbol>
<symbol id="man" viewBox="0 0 18 18"><path d="M0 0h18v18H0z" fill="#8a8d92"/><circle cx="5" cy="5" r="4" fill="#f0f0f0"/><path d="M0 10h18" stroke="#ddd"/><path d="M5 12h4v5H5zM12 12h4v5h-4z" fill="#1818c8"/></symbol>
<symbol id="wr" viewBox="0 0 18 18"><path d="M2 1h11l2 9-2 7H3z" fill="#e8ecf0"/><path d="M0 9l5 4 6-4v5l-6 4z" fill="#6fb4dc"/><path d="M8 9l7-8 2 2-7 8z" fill="#e8b060"/><path d="M4 4h6M4 6h5" stroke="#555"/></symbol>
<symbol id="drop" viewBox="0 0 18 18"><path d="M0 8h18v4h-8v4H0z" fill="#5aa0d0"/><path d="M6 0v4M12 0v4" stroke="#e02020"/><path d="M4 3l2 3 2-3zM10 3l2 3 2-3z" fill="#e02020"/></symbol>
<symbol id="m2" viewBox="0 0 18 18"><path d="M3 0h14v12H1V4z" fill="#d01818"/><path d="M4 9V5h2v4M6 5h3v4M12 2h2v2h-2v1h3" fill="none" stroke="#fff" stroke-width="1.300"/><path d="M1 12h16v5H0z" fill="#3a9ac8"/></symbol>
<symbol id="m2b" viewBox="0 0 18 18"><path d="M0 1h14v16H0z" fill="#fff" stroke="#111"/><path d="M0 4h14M0 14h14M4 1v16M9 1v16" stroke="#111"/><path d="M3 3h15v9H3z" fill="#d01818"/><path d="M5 10V6h2v4M7 6h3v4M13 4h2v2h-2v1h3" fill="none" stroke="#fff" stroke-width="1.300"/></symbol>
<symbol id="st1" viewBox="0 0 18 18"><path d="M1 1h16v16h-5V6H6v11H1z" fill="#6db6d8" stroke="#1f5a80"/></symbol>
<symbol id="st2" viewBox="0 0 18 18"><path d="M1 1h16v16h-4V9h-2v8H7V9H5v8H1z" fill="#8cd0ec" stroke="#1f6a90"/></symbol>
<symbol id="roof" viewBox="0 0 18 18"><path d="M0 2h18v14H0z" fill="#f0e020" stroke="#a01818"/><path d="M0 2l7 7h4l7-7M0 16l7-7M18 16l-7-7" stroke="#a07810" fill="none"/></symbol>
<symbol id="stamp" viewBox="0 0 18 18"><path d="M1 17V6l5-6h6l5 6v11z" fill="#f4e090" stroke="#e03020" stroke-width="1.500"/><path d="M7 4h4v4l4 2v3H3v-3l4-2z" fill="#d0e4fa" stroke="#2f66b8"/></symbol>
<symbol id="pen" viewBox="0 0 18 18"><path d="M7 9l7-9 3 2-7 9z" fill="#e0b070"/><path d="M6 10l4 2-2 3-3-1z" fill="#ddd"/><path d="M1 16h15" stroke="#3a9ae0" stroke-width="2"/><path d="M0 14h4v4H0zM14 14h4v4h-4z" fill="#2468c0"/></symbol>
<symbol id="book" viewBox="0 0 18 18"><path d="M1 0l8 4v13L1 13zM17 2l-6 2v13l6-2z" fill="#f4f0f4" stroke="#504050"/><path d="M9 4h2v13H9z" fill="#b090a8"/></symbol>
<symbol id="form" viewBox="0 0 18 18"><path d="M0 1h18v16H0z" fill="#2f78b8"/><path d="M2 4h6M2 7h6M2 12h6M2 15h6" stroke="#d8ecfa" stroke-width="2"/><path d="M9 6h7v8H9z" fill="#f0a878"/></symbol>
<symbol id="comp" viewBox="0 0 18 18"><circle cx="9" cy="9" r="7" fill="none" stroke="#111" stroke-width="4"/><circle cx="9" cy="9" r="7.500" fill="none" stroke="#bdbdbd"/><path d="M9 2v14M3 10l6-3 6 3" stroke="#111" stroke-width="3" fill="none"/><path d="M9 2v14M5 12l4-5 4 5" stroke="#c8c8c8" fill="none"/></symbol>
<symbol id="help" viewBox="0 0 18 18"><circle cx="9" cy="9" r="8.500" fill="#2d7fe8" stroke="#e8eef6" stroke-width="1.500"/><path d="M6 7c0-4 6-4 6-1 0 2-3 2-3 5M9 13v2" fill="none" stroke="#fff" stroke-width="2"/></symbol>
<symbol id="o1" viewBox="0 0 18 18"><path d="M1 0h10v8H1z" fill="#e4e4e4" stroke="#222"/><path d="M4 5h10v7H4z" fill="#8a8d92" stroke="#ddd"/><path d="M8 10h9v7H8z" fill="#d0d0d0" stroke="#222"/></symbol>
<symbol id="o2" viewBox="0 0 18 18"><path d="M1 0h10v7H1z" fill="#fff" stroke="#222"/><path d="M4 5h10v6H4z" fill="#777" stroke="#bbb"/><path d="M7 9h10v8H7z" fill="#fff" stroke="#222"/></symbol>
<symbol id="o3" viewBox="0 0 18 18"><path d="M1 1h11v9H1z" fill="#e4e4e4" stroke="#222"/><path d="M5 6h12v10H5z" fill="#8a8d92" stroke="#ddd"/></symbol>
<symbol id="o4" viewBox="0 0 18 18"><path d="M6 7h11v9H6z" fill="#8a8d92" stroke="#ddd"/><path d="M1 1h12v10H1z" fill="#f4f4f4" stroke="#222"/></symbol>
<symbol id="al1" viewBox="0 0 18 18"><path d="M2 1v16" stroke="#ccc" stroke-width="1.500"/><path d="M3 2h14v5H3zM3 10h11v5H3z" fill="#ddd" stroke="#111"/></symbol>
<symbol id="al2" viewBox="0 0 18 18"><path d="M16 1v16" stroke="#ccc" stroke-width="1.500"/><path d="M1 2h14v5H1zM4 10h11v5H4z" fill="#ddd" stroke="#111"/></symbol>
<symbol id="al3" viewBox="0 0 18 18"><path d="M1 2h16v5H1zM3 10h12v5H3z" fill="#ddd" stroke="#111"/><path d="M9 0v18M1 8.500h16" stroke="#222" stroke-width="1.500"/></symbol>
<symbol id="al4" viewBox="0 0 18 18"><path d="M0 3h18" stroke="#ccc" stroke-width="1.500"/><path d="M1 4h5v12H1zM10 4h7v8h-7z" fill="#ddd" stroke="#111"/></symbol>
<symbol id="al5" viewBox="0 0 18 18"><path d="M0 15h18" stroke="#ccc" stroke-width="1.500"/><path d="M2 3h5v11H2zM11 6h6v8h-6z" fill="#ddd" stroke="#111"/></symbol>
<symbol id="al6" viewBox="0 0 18 18"><path d="M0 9h18" stroke="#ccc" stroke-width="1.500"/><path d="M1 4h6v10H1zM11 5h6v8h-6z" fill="#ddd" stroke="#111"/></symbol>
<symbol id="al7" viewBox="0 0 18 18"><path d="M0 2h4v4H0zM7 2h4v4H7zM14 2h4v4h-4z" fill="#ddd" stroke="#111"/><path d="M2 6v12M9 6v12M16 6v12" stroke="#ccc" stroke-width="1.500"/></symbol>
<symbol id="al8" viewBox="0 0 18 18"><path d="M1 0h4v4H1zM1 7h4v4H1zM1 14h4v4H1z" fill="#ddd" stroke="#111"/><path d="M7 2h11M7 9h8M7 16h11" stroke="#ccc" stroke-width="1.500"/></symbol>
<symbol id="al9" viewBox="0 0 18 18"><path d="M1 16L7 3M7 16l6-13M12 16l6-13" stroke="#111" stroke-width="4"/><path d="M1 16L7 3M7 16l6-13M12 16l5-13" stroke="#ddd" stroke-width="1.800"/></symbol>
<!-- status bar -->
<symbol id="s-menu" viewBox="0 0 18 18"><path d="M0 3h18M0 9h18M0 15h18" stroke="#dfe1e4" stroke-width="2.500"/></symbol>
<symbol id="s-plus" viewBox="0 0 18 18"><path d="M9 1v16M1 9h16" stroke="#dfe1e4" stroke-width="2"/></symbol>
<symbol id="s-grid" viewBox="0 0 18 18"><path d="M5 0v18M13 0v18M9 0v18M0 5h18M0 9h18M0 13h18" stroke="#b8bcc2" stroke-width="1.200"/></symbol>
<symbol id="s-snap" viewBox="0 0 18 18"><path d="M2 4h14M2 9h14M2 14h14" stroke="#dfe1e4" stroke-width="2" stroke-dasharray="2 4"/></symbol>
<symbol id="s-inf" viewBox="0 0 18 18"><path d="M9 8V1h8v6H9" fill="none" stroke="#c4c8cd"/><path d="M1 11h9v6H1z" fill="#dfe1e4"/></symbol>
<symbol id="s-dyn" viewBox="0 0 18 18"><path d="M5 1v8M1 5h8" stroke="#fff"/><path d="M6 10h12v6H6z" fill="#fff"/><path d="M8 12v2" stroke="#5b8fc4"/></symbol>
<symbol id="s-ort" viewBox="0 0 18 18"><path d="M3 1v14h14M3 10h5v5" fill="none" stroke="#9a9fa7" stroke-width="1.300"/></symbol>
<symbol id="s-pol" viewBox="0 0 18 18"><circle cx="8" cy="9" r="7" fill="none" stroke="#dfe9f4" stroke-width="1.300"/><path d="M8 9l7-7M8 9h9" stroke="#dfe9f4" stroke-width="1.300"/></symbol>
<symbol id="s-iso" viewBox="0 0 18 18"><path d="M4 2l10 13" stroke="#c05050"/><path d="M9 0v18" stroke="#3fae6c"/><path d="M8 7h3v3H8z" fill="#3b4453" stroke="#eee"/></symbol>
<symbol id="s-otr" viewBox="0 0 18 18"><path d="M15 2L2 15h15" fill="none" stroke="#dfe9f4" stroke-width="1.300"/><path d="M1 13h4v4H1z" fill="#dfe9f4"/></symbol>
<symbol id="s-osn" viewBox="0 0 18 18"><path d="M3 3h14v14H3z" fill="none" stroke="#dfe9f4"/><path d="M0 1h5v5H0z" fill="#5b8fc4" stroke="#fff"/></symbol>
<symbol id="s-lw" viewBox="0 0 18 18"><path d="M1 4h8M1 9h11M1 14h9" stroke="#dfe1e4" stroke-width="3"/><path d="M11 4h6M13 9h4M11 14h6" stroke="#b8bcc2"/></symbol>
<symbol id="s-tr" viewBox="0 0 18 18"><rect x="1" y="1" width="16" height="16" rx="3" fill="#fff"/><path d="M2 4h14M2 10h14" stroke="#5b8fc4" stroke-width="3" stroke-dasharray="3 3"/><path d="M5 7h12M5 13h12" stroke="#5b8fc4" stroke-width="3" stroke-dasharray="3 3"/></symbol>
<symbol id="s-sc" viewBox="0 0 18 18"><path d="M7 7h10v10H7z" fill="#7edb9c"/><path d="M5 13V5h8M3 0v6M0 3h6" fill="none" stroke="#7edb9c" stroke-opacity=".7"/></symbol>
<symbol id="s-3d" viewBox="0 0 18 18"><path d="M4 6h9v9H6M4 6v6M4 6l4-5h9v9l-4 5M13 6l4-5" fill="none" stroke="#9a9fa7"/><path d="M1 13h4v4H1z" fill="none" stroke="#e09068"/></symbol>
<symbol id="s-ucs" viewBox="0 0 18 18"><path d="M3 1v14h14M1 4l2-3 2 3M14 12l3 3-3 2" fill="none" stroke="#fff" stroke-width="1.300"/><path d="M11 3l-3 6h3l-1 4 4-6h-3z" fill="#fff"/></symbol>
<symbol id="s-fil" viewBox="0 0 18 18"><path d="M3 6h10v10H3zM3 6l3-5h10l-3 5M16 1v10l-3 5" fill="none" stroke="#c4c8cd"/><path d="M1 4h4v4H1zM11 4h4v4h-4zM1 13h4v4H1zM11 13h4v4h-4z" fill="#6cbcf7"/></symbol>
<symbol id="s-giz" viewBox="0 0 18 18"><path d="M9 2a8 8 0 0 1 6 11H3A8 8 0 0 1 9 2v8l-6 5M9 10l6 5" fill="none" stroke="#fff" stroke-width="1.200"/><path d="M7 0h4v3H7zM1 13h4v4H1zM13 13h4v4h-4z" fill="#5b8fc4" stroke="#fff"/></symbol>
<symbol id="s-an" viewBox="0 0 18 18"><path d="M8 1l2 7 5 9-5-3-2 0-5 3 5-9z" fill="#dfe1e4" stroke="#dfe1e4"/></symbol>
<symbol id="s-an1" viewBox="0 0 18 18"><use href="#s-an"/><circle cx="15" cy="4" r="2.500" fill="none" stroke="#fff"/></symbol>
<symbol id="s-an2" viewBox="0 0 18 18"><use href="#s-an"/><path d="M16 0l-4 5h3l-2 4 4-5h-2z" fill="#fff"/></symbol>
<symbol id="s-gear" viewBox="0 0 18 18"><circle cx="9" cy="9" r="5" fill="none" stroke="#dfe1e4" stroke-width="4"/><path d="M9 0v3M9 15v3M0 9h3M15 9h3M2.500 2.500l2 2M13.500 13.500l2 2M15.500 2.500l-2 2M4.500 13.500l-2 2" stroke="#dfe1e4" stroke-width="3"/></symbol>
<symbol id="s-rul" viewBox="0 0 18 18"><path d="M4 0h9v18H4z" fill="#dfe1e4"/><path d="M9 4h4M9 8h4M9 12h4M9 15h4" stroke="#555c68"/></symbol>
<symbol id="s-qp" viewBox="0 0 18 18"><path d="M3 1h13v16H3z" fill="none" stroke="#b8bcc2" stroke-width="1.500"/><path d="M4 3h11" stroke="#b8bcc2" stroke-width="2"/><path d="M6 7h2M6 10h2M6 13h2M10 7h4M10 10h4M10 13h4" stroke="#dfe1e4" stroke-width="1.300"/></symbol>
<symbol id="s-lk" viewBox="0 0 18 18"><path d="M8 14H1V1h15v6" fill="none" stroke="#b8bcc2" stroke-width="1.300"/><path d="M1 3h15" stroke="#b8bcc2" stroke-width="2"/><path d="M8 11h8v7H8z" fill="#fff"/><path d="M14 11V9a2 2 0 0 1 4 0v2" stroke="#fff" fill="none"/></symbol>
<symbol id="s-shp" viewBox="0 0 18 18"><path d="M1 1h6v7H1zM9 10l4 7H5z" fill="none" stroke="#9a9fa7" stroke-width="1.300"/><circle cx="13" cy="7" r="4" fill="none" stroke="#9a9fa7" stroke-width="1.300"/></symbol>
<symbol id="s-box" viewBox="0 0 18 18"><path d="M1 1h16v16H1z" fill="none" stroke="#1e88e5" stroke-width="1.500" stroke-dasharray="2 1"/><path d="M4 4h7v7H4zM8 8h6v6H8z" fill="#15406a" stroke="#1e88e5" stroke-width="1.500"/></symbol>
<symbol id="s-l1" viewBox="0 0 18 18"><path d="M1 4h16M1 14h16" stroke="#a8adb4"/><path d="M1 9h16" stroke="#7d838c" stroke-width="2"/></symbol>
<symbol id="s-l2" viewBox="0 0 18 18"><path d="M1 4h16M1 14h16" stroke="#a8adb4"/><path d="M3 9h12" stroke="#7d838c" stroke-width="7" stroke-dasharray="1 1"/></symbol>
<symbol id="s-l3" viewBox="0 0 18 18"><path d="M1 5h16M1 13h16" stroke="#dfe1e4" stroke-width="2"/></symbol>
<symbol id="s-l4" viewBox="0 0 18 18"><path d="M7 4h11M5 9h12M3 13h14M0 3h5M3 0v5" stroke="#8d939c"/></symbol>
<symbol id="s-perf" viewBox="0 0 18 18"><circle cx="9" cy="9" r="8" fill="#87afd8" stroke="#e8eff8" stroke-width="1.500"/><path d="M7 13l7-9" stroke="#fff" stroke-width="2"/></symbol>
<symbol id="s-full" viewBox="0 0 18 18"><path d="M1 3h16v13H1z" fill="none" stroke="#8d939c" stroke-width="1.300"/><path d="M11 5h4v4zM3 10v4h4z" fill="#fff"/></symbol>
</svg>

<div class="window">
<header class="titlebar">
  <div class="quick">
    <button><svg class="w28"><use href="#logo"/></svg></button><button class="caret"><svg><use href="#dn"/></svg></button>
    <button><svg><use href="#new"/></svg></button><button><svg><use href="#open"/></svg></button><button><svg><use href="#save"/></svg></button><button><svg><use href="#saveas"/></svg></button><button><svg><use href="#mob1"/></svg></button><button><svg><use href="#mob2"/></svg></button><button><svg><use href="#print"/></svg></button><button><svg><use href="#undo"/></svg></button><button class="caret small"><svg><use href="#dn"/></svg></button><button><svg><use href="#redo"/></svg></button><button class="caret small"><svg><use href="#dn"/></svg></button><button class="caret"><svg class="cust"><use href="#cust"/></svg></button>
    <button class="share"><svg><use href="#plane"/></svg>共享</button>
  </div>
  <h1 class="title"><span>T20天正建筑软件 V10.0 For Autodesk AutoCAD 2024</span><span>Drawing1.dwg</span></h1>
  <div class="account">
    <svg class="tri"><use href="#tri-r"/></svg>
    <input class="search" type="text" placeholder="键入关键字或短语" aria-label="搜索">
    <button><svg><use href="#mag"/></svg></button>
    <button class="login"><svg><use href="#user"/></svg>登录</button>
    <button class="caret small"><svg><use href="#dn"/></svg></button>
    <button><svg><use href="#cart"/></svg></button><button><svg><use href="#adsk"/></svg></button><button class="caret small"><svg><use href="#dn"/></svg></button><button><svg class="ff"><use href="#ff"/></svg></button>
  </div>
  <div class="wbtns"><button><svg><use href="#wmin"/></svg></button><button><svg><use href="#wmax"/></svg></button><button><svg><use href="#wclose"/></svg></button></div>
</header>

<nav class="tabs">
  <a href="#" class="on">默认</a><a href="#">插入</a><a href="#">注释</a><a href="#">参数化</a><a href="#">视图</a><a href="#">管理</a><a href="#">输出</a><a href="#">附加模块</a><a href="#">协作</a><a href="#">精选应用</a><a href="#">天正建筑</a><a href="#">Express Tools</a>
  <button class="ribmin"><svg class="rm"><use href="#ribmin"/></svg><svg class="sm"><use href="#dn"/></svg></button>
</nav>

<section class="ribbon">
  <div class="panel p-draw">
    <div class="body">
      <button class="big"><svg><use href="#r-line"/></svg>直线</button>
      <button class="big"><svg><use href="#r-pline"/></svg>多段线</button>
      <button class="big"><svg><use href="#r-circle"/></svg>圆</button>
      <button class="big"><svg><use href="#r-arc"/></svg>圆弧</button>
      <div class="rows"><button><svg><use href="#rect"/></svg></button><button><svg><use href="#d-ell"/></svg></button><button><svg><use href="#hatchS"/></svg></button></div>
    </div>
    <div class="name">绘图 <svg><use href="#dn"/></svg></div>
  </div>
  <div class="panel p-mod">
    <div class="body">
      <div class="rows"><button><svg><use href="#move"/></svg>移动</button><button><svg><use href="#copyS"/></svg>复制</button><button><svg><use href="#stretch"/></svg>拉伸</button></div>
      <div class="rows"><button><svg><use href="#rotate"/></svg>旋转</button><button><svg><use href="#mirror"/></svg>镜像</button><button><svg><use href="#scale"/></svg>缩放</button></div>
      <div class="rows"><button><svg><use href="#trim"/></svg>修剪</button><button><svg><use href="#m-fil"/></svg>圆角</button><button><svg><use href="#array"/></svg>阵列</button></div>
      <div class="rows pushed"><button><svg><use href="#erase"/></svg></button><button><svg><use href="#m-exp"/></svg></button><button><svg><use href="#offset"/></svg></button></div>
    </div>
    <div class="name">修改 <svg><use href="#dn"/></svg></div>
  </div>
  <div class="panel p-ann">
    <div class="body">
      <button class="big"><svg class="glyphA"><use href="#bigA"/></svg>文字</button>
      <button class="big"><svg class="dimB"><use href="#dim"/></svg>标注</button>
      <div class="rows"><button><svg><use href="#dimS"/></svg>线性</button><button><svg><use href="#m-ext"/></svg>引线</button><button><svg><use href="#table"/></svg>表格</button></div>
    </div>
    <div class="name">注释 <svg><use href="#dn"/></svg></div>
  </div>
  <div class="panel p-lay">
    <div class="body">
      <button class="big two"><svg><use href="#lay-big"/></svg>图层<br>特性</button>
      <div class="stack">
        <div class="combo layer"><svg><use href="#bulbY"/></svg><svg><use href="#sunY"/></svg><svg><use href="#lockY"/></svg><i class="sw"></i><select aria-label="图层"><option>0</option></select><svg class="dn"><use href="#dn"/></svg></div>
        <div class="line"><button><svg><use href="#l-off"/></svg></button><button><svg><use href="#l-iso"/></svg></button><button><svg><use href="#l-frz"/></svg></button><button><svg><use href="#l-lock"/></svg></button><button><svg><use href="#l-cur"/></svg>置为当前</button></div>
        <div class="line"><button><svg><use href="#l-on"/></svg></button><button><svg><use href="#l-iso"/></svg></button><button><svg><use href="#l-thaw"/></svg></button><button><svg><use href="#l-unl"/></svg></button><button><svg><use href="#l-mat"/></svg>匹配图层</button></div>
      </div>
    </div>
    <div class="name">图层 <svg><use href="#dn"/></svg></div>
  </div>
  <div class="panel p-blk">
    <div class="body">
      <button class="big"><svg><use href="#b-ins"/></svg>插入<svg class="sm"><use href="#dn"/></svg></button>
      <div class="rows"><button><svg><use href="#b-cre"/></svg>创建</button><button><svg><use href="#b-edt"/></svg>编辑</button><button><svg><use href="#b-att"/></svg>编辑属性<svg class="sm far"><use href="#dn"/></svg></button></div>
    </div>
    <div class="name">块 <svg><use href="#dn"/></svg></div>
  </div>
  <div class="panel p-prop">
    <div class="body">
      <button class="big two"><svg><use href="#p-mat"/></svg>特性<br>匹配</button>
      <div class="stack">
        <div class="pr"><svg><use href="#p-col"/></svg><div class="combo"><i class="sw"></i><select aria-label="颜色"><option>ByLayer</option></select><svg class="dn"><use href="#dn"/></svg></div></div>
        <div class="pr"><svg><use href="#p-lw"/></svg><div class="combo"><i class="ln"></i><select aria-label="线宽"><option>ByLayer</option></select><svg class="dn"><use href="#dn"/></svg></div></div>
        <div class="pr"><svg><use href="#p-lt"/></svg><div class="combo"><i class="ln"></i><select aria-label="线型"><option>ByLayer</option></select><svg class="dn"><use href="#dn"/></svg></div></div>
      </div>
    </div>
    <div class="name">特性 <svg><use href="#dn"/></svg><svg class="cor edge"><use href="#corner"/></svg></div>
  </div>
  <div class="panel p-grp">
    <div class="body">
      <button class="big"><svg><use href="#g-big"/></svg>组</button>
      <div class="rows ic"><button><svg><use href="#g-un"/></svg></button><button><svg><use href="#g-ed"/></svg></button><button class="sel"><svg><use href="#g-sel"/></svg></button></div>
    </div>
    <div class="name">组 <svg><use href="#dn"/></svg></div>
  </div>
  <div class="panel p-util">
    <div class="body">
      <button class="big"><svg><use href="#u-meas"/></svg>测量<svg class="sm"><use href="#dn"/></svg></button>
      <div class="rows ic"><button><svg><use href="#u-sel"/></svg></button><button><svg><use href="#u-all"/></svg></button><button><svg><use href="#u-calc"/></svg></button></div>
    </div>
    <div class="name">实用工具 <svg><use href="#dn"/></svg></div>
  </div>
  <div class="panel p-clip">
    <div class="body">
      <button class="big"><svg><use href="#c-paste"/></svg>粘贴<svg class="sm"><use href="#dn"/></svg></button>
      <div class="rows"><button><svg><use href="#c-cut"/></svg><svg class="sm"><use href="#dn"/></svg></button><button><svg><use href="#c-copy"/></svg><svg class="sm"><use href="#dn"/></svg></button></div>
    </div>
    <div class="name">剪贴板</div>
  </div>
  <div class="panel p-view">
    <div class="body"><button class="big"><svg><use href="#v-base"/></svg>基点<svg class="sm"><use href="#dn"/></svg></button></div>
    <div class="name">视图 <svg><use href="#dn"/></svg><svg class="cor"><use href="#corner"/></svg></div>
  </div>
</section>

<main class="work">
  <aside class="tree">
    <h2><i class="grip"></i>T...</h2>
    <ul>
      <li>设　　置</li><li>轴网柱子</li><li>墙　　体</li><li>门　　窗</li><li>房　　间</li><li>屋　　顶</li><li>楼梯其他</li><li>立　　面</li><li>剖　　面</li><li>文字表格</li><li>尺寸标注</li><li>符号标注</li><li>图层控制</li><li>工　　具</li><li>图块图案</li><li>建筑防火</li><li>场地布置</li><li>三维建模</li><li>文件布图</li><li>其　　它</li><li>数据中心</li><li>帮　　助</li>
    </ul>
  </aside>
  <div class="vbar left"><i class="grip h"></i>
    <button><svg><use href="#d-line"/></svg></button><button><svg><use href="#d-xl"/></svg></button><button><svg><use href="#d-pl"/></svg></button><button><svg><use href="#d-poly"/></svg></button><button><svg><use href="#rect"/></svg></button><button><svg><use href="#d-arc"/></svg></button><button><svg><use href="#d-cir"/></svg></button><button><svg><use href="#d-cloud"/></svg></button><button><svg><use href="#d-spl"/></svg></button><button><svg><use href="#d-ell"/></svg></button><button><svg><use href="#d-ela"/></svg></button><button><svg><use href="#d-ins"/></svg></button><button><svg><use href="#b-cre"/></svg></button><button><svg><use href="#d-pt"/></svg></button><button><svg><use href="#hatchS"/></svg></button><button><svg><use href="#d-grad"/></svg></button><button><svg><use href="#d-reg"/></svg></button><button><svg><use href="#table"/></svg></button><button><svg><use href="#d-A"/></svg></button><button><svg><use href="#d-sel"/></svg></button>
  </div>

  <div class="canvas">
    <div class="vp">[−][俯视][二维线框]</div>
    <div class="mdi"><button><svg viewBox="0 0 12 12"><path d="M0 8h11v3H0z" fill="#f0f0f0"/></svg></button><button><svg viewBox="0 0 12 12"><path d="M4 0h8v8h-2V2H4z" fill="#f0f0f0"/><path d="M1 4h7v7H1z" fill="none" stroke="#f0f0f0" stroke-width="2.500"/></svg></button><button><svg viewBox="0 0 12 12"><path d="M2 1l8 9M10 1l-8 9" stroke="#f0f0f0" stroke-width="2.500"/></svg></button></div>
    <svg class="cross" viewBox="0 0 130 130"><path d="M0 64.500h61M68 64.500h61M64.500 0v61M64.500 68v61M61.500 61.500h6v6h-6z" fill="none" stroke="#e8e8e8"/></svg>
    <div class="cube">
      <svg viewBox="0 0 132 132"><circle cx="66" cy="66" r="59" fill="none" stroke="#2b2b2b" stroke-width="14"/></svg>
      <span class="n">北</span><span class="w">西</span><span class="e">东</span><span class="s">南</span>
      <div class="face"><b>上</b></div>
    </div>
    <button class="ucsname">未命名<svg viewBox="0 0 9 6"><path d="M.5.5h8L4.500 5z" fill="#a9acb8" stroke="#777a86"/></svg></button>
    <div class="navbar">
      <svg viewBox="0 0 34 228"><g fill="none" stroke="#2c2c2c" stroke-width="1.500"><circle cx="27" cy="5" r="3.500"/><path d="M25.500 3.500l3 3M28.500 3.500l-3 3"/><path d="M17 20h12v12a12 12 0 1 1-12-12z"/><circle cx="17" cy="31" r="6"/><path d="M9 40h16"/><path d="M10 88l-6-8c1-3 4-1 6 2l-1-12c2-2 3 0 4 6l1-9c2-2 3 0 3 8l2-8c2-1 3 0 2 9l3-6c2-1 3 1 2 5l-2 10-3 6h-7z"/><path d="M5 96l16 16M20 96L5 112M4 95h3v3M21 95h-3v3"/><circle cx="22" cy="111" r="5"/><path d="M25 114l5 5" stroke-width="3"/><path d="M15 158v-18l-2 2 4-5 4 5-2-2v18zM13 147c-10 1-11 5-5 8M21 147c9 1 10 7 1 8h-14M11 152l-3 3 3 3"/><path d="M5 181h6v7H5zM14 181h6v7h-6zM23 181h6v7h-6zM5 192h17v14H5z"/><circle cx="27" cy="221" r="3"/></g><path d="M10 195l8 4-8 4zM15 52h5l-2.500 3zM15 128h5l-2.500 3zM15 169h5l-2.500 3z" fill="#2c2c2c"/><path d="M3 61.500h28M3 177.500h28" stroke="#5c5c5c"/></svg>
    </div>
    <div class="ucs"><svg viewBox="0 0 62 62"><path d="M5.500 1v54.500H60M.5 50.500h10v10H.5z" fill="none" stroke="#e8e8e8" stroke-width="1.200"/></svg><span class="uy">Y</span><span class="ux">X</span></div>

    <section class="insight">
      <div class="side">
        <button><svg viewBox="0 0 12 12"><path d="M2 2l8 8M10 2l-8 8" stroke="#d0d3d7" stroke-width="2.500"/></svg></button>
        <button><svg viewBox="0 0 12 12"><path d="M2 1v10M2 6h2" stroke="#d0d3d7" stroke-width="1.500"/><path d="M2 3l3 3-3 3zM11 2v8L7 6z" fill="#d0d3d7"/></svg></button>
        <button><svg viewBox="0 0 18 18"><circle cx="9" cy="9" r="4.500" fill="none" stroke="#d0d3d7" stroke-width="3"/><path d="M9 0v4M9 14v4M0 9h4M14 9h4M3 3l2.500 2.500M12.500 12.500L15 15M15 3l-2.500 2.500M5.500 12.500L3 15" stroke="#d0d3d7" stroke-width="2.500"/></svg></button>
        <h2>活动见解</h2>
        <svg class="clipi" viewBox="0 0 18 18"><path d="M1 2h13v15H1z" fill="#e4e6e8"/><path d="M4 0h7v3H4z" fill="#fff"/><path d="M3 6h9M3 9h9M3 12h7" stroke="#3f9be0" stroke-width="1.500"/><path d="M13 8l-4 6h3l-1 4 7-6h-4l3-4z" fill="#ffd27a"/></svg>
      </div>
      <div class="pane"></div>
    </section>

    <div class="cmd">
      <p>COMMANDMACROSCLOSE</p><p>命令: tshowbar</p><p>加载自定义文件成功。自定义组: 天正快捷菜单</p>
      <div class="cmdline">
        <i></i><button><svg class="s12" viewBox="0 0 12 12"><path d="M1 1l9 10M10 1L1 11" stroke="#a9acb1" stroke-width="2"/></svg></button>
        <button><svg viewBox="0 0 18 18"><path d="M2 16l8-8" stroke="#a9acb1" stroke-width="3.500"/><path d="M9 9a5 5 0 0 1 5-8l-2 4 2 2 3-2a5 5 0 0 1-7 5z" fill="#a9acb1"/></svg></button>
        <label><svg viewBox="0 0 18 18"><path d="M1 3h16v12H1z" fill="none" stroke="#555" stroke-width="1.500"/><path d="M1 3h16v2H1z" fill="#555"/><path d="M3 7l3 2-3 2M8 12h4" fill="none" stroke="#444"/></svg><svg class="sm dk" viewBox="0 0 9 6"><path d="M0 0h9L4.500 5z" fill="#444"/></svg><input type="text" placeholder="键入命令" aria-label="命令行"><svg class="sm dk" viewBox="0 0 9 6"><path d="M0 6h9L4.500 1z" fill="#444"/></svg></label>
      </div>
    </div>
  </div>

  <div class="vbar right"><i class="grip h"></i>
    <button><svg><use href="#erase"/></svg></button><button><svg><use href="#copyS"/></svg></button><button><svg><use href="#mirror"/></svg></button><button><svg><use href="#offset"/></svg></button><button><svg><use href="#array"/></svg></button><button><svg><use href="#move"/></svg></button><button><svg><use href="#rotate"/></svg></button><button><svg><use href="#scale"/></svg></button><button><svg><use href="#stretch"/></svg></button><button><svg><use href="#trim"/></svg></button><button><svg><use href="#m-ext"/></svg></button><button><svg><use href="#m-brk1"/></svg></button><button><svg><use href="#m-brk2"/></svg></button><button><svg><use href="#m-join"/></svg></button><button><svg><use href="#m-cha"/></svg></button><button><svg><use href="#m-fil"/></svg></button><button><svg><use href="#m-bld"/></svg></button><button><svg><use href="#m-exp"/></svg></button>
  </div>
</main>

<footer class="status">
  <button class="menu"><svg><use href="#s-menu"/></svg></button>
  <nav class="layouts"><a href="#" class="on">模型</a><a href="#">布局1</a><i></i><a href="#">布局2</a><i></i><button><svg><use href="#s-plus"/></svg></button><i></i></nav>
  <div class="cells">
    <div class="cell"><button class="txt scale">比例 1:100 <svg class="sm"><use href="#dn"/></svg></button></div>
    <div class="cell coords">41981, 33424, 0</div>
    <div class="cell gap model"><button class="txt">模型</button></div>
    <div class="cell gap"><button><svg><use href="#s-grid"/></svg></button><button><svg><use href="#s-snap"/></svg></button><button class="ar"><svg><use href="#dn"/></svg></button></div>
    <div class="cell gap"><button><svg><use href="#s-inf"/></svg></button></div>
    <div class="cell"><button class="on"><svg><use href="#s-dyn"/></svg></button></div>
    <div class="cell"><button><svg><use href="#s-ort"/></svg></button></div>
    <div class="cell"><button class="on"><svg><use href="#s-pol"/></svg></button><button class="ar"><svg><use href="#dn"/></svg></button><button><svg><use href="#s-iso"/></svg></button><button class="ar"><svg><use href="#dn"/></svg></button></div>
    <div class="cell"><button class="on"><svg><use href="#s-otr"/></svg></button></div>
    <div class="cell"><button class="on"><svg><use href="#s-osn"/></svg></button><button class="ar"><svg><use href="#dn"/></svg></button></div>
    <div class="cell"><button><svg><use href="#s-lw"/></svg></button></div>
    <div class="cell"><button class="on"><svg><use href="#s-tr"/></svg></button></div>
    <div class="cell"><button><svg><use href="#s-sc"/></svg></button></div>
    <div class="cell"><button><svg><use href="#s-3d"/></svg></button><button class="ar"><svg><use href="#dn"/></svg></button></div>
    <div class="cell gap"><button class="on"><svg><use href="#s-ucs"/></svg></button><button><svg><use href="#s-fil"/></svg></button><button class="ar"><svg><use href="#dn"/></svg></button><button class="on"><svg><use href="#s-giz"/></svg></button><button class="ar"><svg><use href="#dn"/></svg></button></div>
    <div class="cell gap"><button class="on"><svg><use href="#s-an1"/></svg></button><button><svg><use href="#s-an2"/></svg></button><button><svg><use href="#s-an"/></svg></button><button class="txt">1:1 / 100% <svg class="sm"><use href="#dn"/></svg></button></div>
    <div class="cell gap"><button><svg><use href="#s-gear"/></svg></button><button class="ar"><svg><use href="#dn"/></svg></button></div>
    <div class="cell"><button><svg><use href="#s-plus"/></svg></button></div>
    <div class="cell gap units"><svg><use href="#s-rul"/></svg><select aria-label="单位"><option>小数</option></select><svg class="sm"><use href="#dn"/></svg></div>
    <div class="cell"><button><svg><use href="#s-qp"/></svg></button></div>
    <div class="cell gap"><button><svg><use href="#s-lk"/></svg></button><button class="ar"><svg><use href="#dn"/></svg></button></div>
    <div class="cell"><button><svg><use href="#s-shp"/></svg></button><button><svg><use href="#s-box"/></svg></button><button><svg><use href="#s-l1"/></svg></button><button><svg><use href="#s-l2"/></svg></button><button><svg><use href="#s-l3"/></svg></button><button><svg><use href="#s-l4"/></svg></button></div>
    <div class="cell gap"><button class="on"><svg><use href="#s-perf"/></svg></button></div>
    <div class="cell gap stub"></div>
    <div class="cell gap"><button><svg><use href="#s-full"/></svg></button></div>
    <div class="cell"><button><svg><use href="#s-menu"/></svg></button></div>
  </div>
</footer>

<div class="tbar t1"><i class="grip"></i><button><svg><use href="#grid"/></svg></button><button><svg><use href="#axis"/></svg></button><button><svg><use href="#axis2"/></svg></button><button><svg><use href="#axis3"/></svg></button><i class="sep"></i><button><svg><use href="#w1"/></svg></button><button><svg><use href="#w2"/></svg></button><button><svg><use href="#w3"/></svg></button><button><svg><use href="#w4"/></svg></button><button><svg><use href="#door"/></svg></button><button><svg><use href="#col"/></svg></button><i class="sep"></i><button><svg><use href="#t-zi2"/></svg></button><button><svg><use href="#t-zi"/></svg></button><button><svg><use href="#t-zi3"/></svg></button><i class="sep"></i><button><svg><use href="#dm1"/></svg></button><button><svg><use href="#dm2"/></svg></button><button><svg><use href="#dm3"/></svg></button><button><svg><use href="#dm4"/></svg></button><button><svg><use href="#dm5"/></svg></button><button><svg><use href="#dm6"/></svg></button><i class="sep"></i><button><svg><use href="#ball"/></svg></button><button><svg><use href="#mv1"/></svg></button><button><svg><use href="#mv2"/></svg></button><button><svg><use href="#clip"/></svg></button><button class="cl"><svg><use href="#x"/></svg></button></div>

<div class="tbar t2"><i class="grip"></i><button><svg><use href="#ly"/></svg></button><button><svg><use href="#ly2"/></svg></button><button><svg><use href="#ly3"/></svg></button><i class="sep"></i><button><svg><use href="#bb"/></svg></button><button><svg><use href="#bb2"/></svg></button><button><svg><use href="#by"/></svg></button><button><svg><use href="#by2"/></svg></button><button><svg><use href="#by3"/></svg></button><button><svg><use href="#sn"/></svg></button><button><svg><use href="#sn2"/></svg></button><button><svg><use href="#su"/></svg></button><button><svg><use href="#su2"/></svg></button><button><svg><use href="#lk"/></svg></button><button><svg><use href="#lk2"/></svg></button><button><svg><use href="#lk3"/></svg></button><button><svg><use href="#ly4"/></svg></button><i class="sep"></i><button><svg><use href="#ly5"/></svg></button><button><svg><use href="#ly6"/></svg></button><button><svg><use href="#pal"/></svg></button><button><svg><use href="#pal2"/></svg></button><button class="cl"><svg><use href="#x"/></svg></button></div>

<div class="tbar t3"><i class="grip"></i><button><svg><use href="#hand"/></svg></button><button><svg><use href="#pgz"/></svg></button><i class="sep"></i><button><svg><use href="#win"/></svg></button><button><svg><use href="#winx"/></svg></button><i class="sep"></i><button><svg><use href="#gl1"/></svg></button><button><svg><use href="#gl2"/></svg></button><button><svg><use href="#gl3"/></svg></button><button><svg><use href="#gl4"/></svg></button><button><svg><use href="#gl5"/></svg></button><button><svg><use href="#gl6"/></svg></button><button><svg><use href="#gl7"/></svg></button><button><svg><use href="#gl8"/></svg></button><button><svg><use href="#gl9"/></svg></button><i class="sep"></i><button><svg><use href="#bld"/></svg></button><button><svg><use href="#brick"/></svg></button><button><svg><use href="#arch"/></svg></button><button><svg><use href="#house"/></svg></button><i class="sep"></i><button><svg><use href="#eyeR"/></svg></button><button><svg><use href="#eyeG"/></svg></button><button><svg><use href="#eye"/></svg></button><i class="sep"></i><button><svg><use href="#ff4"/></svg></button><button><svg><use href="#note"/></svg></button><button><svg><use href="#broom"/></svg></button><button class="cl"><svg><use href="#x"/></svg></button></div>

<div class="tbar t4"><i class="grip"></i><button><svg><use href="#man"/></svg></button><button><svg><use href="#wr"/></svg></button><button><svg><use href="#ly"/></svg></button><button><svg><use href="#grid"/></svg></button><button><svg><use href="#axis"/></svg></button><button><svg><use href="#axis1"/></svg></button><button><svg><use href="#col"/></svg></button><button><svg><use href="#w2"/></svg></button><button><svg><use href="#drop"/></svg></button><button><svg><use href="#door"/></svg></button><button><svg><use href="#m2"/></svg></button><button><svg><use href="#m2b"/></svg></button><button><svg><use href="#win"/></svg></button><button><svg><use href="#st1"/></svg></button><button><svg><use href="#st2"/></svg></button><button><svg><use href="#roof"/></svg></button><button><svg><use href="#stamp"/></svg></button><button><svg><use href="#pen"/></svg></button><button><svg><use href="#book"/></svg></button><button><svg><use href="#form"/></svg></button><button><svg><use href="#gl8"/></svg></button><button><svg><use href="#gl5"/></svg></button><button><svg><use href="#gl6"/></svg></button><button><svg><use href="#comp"/></svg></button><button><svg><use href="#help"/></svg></button><button class="cl"><svg><use href="#x"/></svg></button></div>

<div class="tbar t5"><i class="grip"></i><button><svg><use href="#o1"/></svg></button><button><svg><use href="#o2"/></svg></button><button><svg><use href="#o3"/></svg></button><button><svg><use href="#o4"/></svg></button><i class="sep"></i><button><svg><use href="#al1"/></svg></button><button><svg><use href="#al2"/></svg></button><button><svg><use href="#al3"/></svg></button><i class="sep"></i><button><svg><use href="#al4"/></svg></button><button><svg><use href="#al5"/></svg></button><button><svg><use href="#al6"/></svg></button><i class="sep"></i><button><svg><use href="#al7"/></svg></button><button><svg><use href="#al8"/></svg></button><button><svg><use href="#al9"/></svg></button><button class="cl"><svg><use href="#x"/></svg></button></div>

<svg class="watermark" aria-hidden="true"><rect width="100%" height="100%" fill="url(#wm)"/></svg>
</div>
</body>
</html>
```
FILE: styles.css
```css
:root {
  --bar: #3b4453;
  --dark: #222933;
  --field: #4a576b;
  --ink: #f0f1f3;
  --active: #5b8fc4;
}
* { box-sizing: border-box; }
body {
  margin: 0;
  background: #05080d;
  color: var(--ink);
  font: 12px/16px "Noto Sans", "Noto Sans CJK SC", sans-serif;
}
button, select, input {
  appearance: none;
  margin: 0;
  padding: 0;
  border: 0;
  border-radius: 0;
  background: none;
  color: inherit;
  font: inherit;
}
button { display: flex; align-items: center; justify-content: center; white-space: nowrap; }
a { color: inherit; text-decoration: none; }
h1, h2, p, ul { margin: 0; padding: 0; font: inherit; list-style: none; }
svg { display: block; flex: none; width: 18px; height: 18px; }
.defs { position: absolute; width: 0; height: 0; }
svg.sm, .sm svg { width: 7px; height: 5px; }

.window {
  position: relative;
  display: flex;
  flex-direction: column;
  height: 100vh;
  overflow: hidden;
  border: 2px solid #168fce;
  border-width: 1px 1px 2px 2px;
  border-top-color: #0a0d12;
  border-radius: 10px;
  background: var(--dark);
}

/* title bar */
.titlebar { display: grid; grid-template-columns: 31% auto 1fr auto; align-items: center; height: 32px; padding: 0 21px 0 13px; }
.quick, .account, .wbtns, .title { display: flex; align-items: center; }
.quick { gap: 8px; }
.w28 { width: 28px; height: 26px; }
.caret svg { width: 8px; height: 5px; }
.quick .caret { margin: 0 4px 0 -4px; }
.quick .small { margin: 0 2px 0 0; }
.caret.small svg { width: 6px; height: 5px; }
.quick .cust { width: 10px; height: 10px; }
.share { gap: 5px; color: #6cbcf7; }
.title { gap: 16px; font-size: 13px; white-space: nowrap; }
.account { gap: 7px; justify-content: flex-end; margin-right: 72px; }
.tri { width: 5px; height: 8px; }
.search { width: 197px; height: 22px; padding: 0 4px; background: #454f61; }
.search::placeholder { color: #b4bac4; font-style: italic; opacity: 1; }
.login { gap: 5px; margin-right: 66px; }
.ff { width: 12px; height: 10px; }
.wbtns { gap: 39px; }
.wbtns svg { width: 12px; height: 12px; }

/* tabs */
.tabs { display: flex; align-items: stretch; height: 28px; padding: 6px 0 0 5px; color: #bfc4cb; }
.tabs a { padding: 3px 11px; }
.tabs .on { background: var(--bar); color: #fff; }
.ribmin { gap: 4px; margin-left: 25px; }
.rm { width: 18px; height: 10px; }

/* ribbon */
.ribbon { display: flex; flex: none; height: 111px; margin: 0 4px 0 3px; background: var(--bar); border-bottom: 1px solid var(--dark); }
.panel { display: flex; flex-direction: column; padding: 6px 0 2px; border-right: 1px solid var(--dark); }
.panel:last-child { border-right: 0; }
.body { display: flex; flex: 1; align-items: flex-start; }
.name { display: flex; align-items: center; justify-content: center; gap: 5px; height: 18px; position: relative; }
.name > svg { width: 9px; height: 6px; }
.name > .cor { width: 8px; height: 8px; margin-left: 3px; }
.name > .edge { position: absolute; right: 4px; }
.big { flex-direction: column; justify-content: flex-start; padding-top: 4px; line-height: 17px; }
.big > svg { width: 36px; height: 36px; margin-bottom: 2px; }
.big > svg.sm { width: 7px; height: 5px; margin-top: 3px; }
.big > svg.glyphA { width: 24px; height: 30px; margin-bottom: 8px; }
.big > svg.dimB { height: 18px; margin-bottom: 20px; }
.rows { display: flex; flex-direction: column; }
.rows button { justify-content: flex-start; gap: 4px; height: 27px; }
.stack { display: flex; flex-direction: column; gap: 3px; }
.line { display: flex; gap: 8px; height: 24px; }
.line button { gap: 5px; }
.combo { display: flex; align-items: center; gap: 8px; height: 24px; padding: 0 5px; background: var(--field); border: 1px solid var(--dark); }
.combo select { flex: 1; min-width: 0; }
.combo .dn { width: 8px; height: 5px; }
.sw { width: 16px; height: 16px; background: #fff; }
.ln { width: 70px; height: 1px; background: #fff; }
.far { margin-left: 5px; }
.p-draw { width: 225px; padding-left: 6px; }
.p-draw .body { gap: 15px; }
.p-draw .rows { margin-left: -8px; }
.p-mod { width: 239px; padding-left: 8px; }
.p-mod .body { gap: 15px; }
.pushed { margin-left: 20px; }
.p-ann { width: 167px; padding-left: 14px; }
.p-ann .body { gap: 16px; }
.p-ann .rows { margin-left: -12px; }
.p-lay { width: 278px; padding-right: 2px; padding-left: 5px; }
.p-lay .body { gap: 4px; }
.p-lay .line { padding-left: 4px; }
.layer { width: 230px; gap: 7px; padding-left: 2px; }
.p-blk { width: 142px; padding-left: 6px; }
.p-blk .body { gap: 8px; }
.p-prop { width: 270px; padding-left: 7px; padding-right: 2px; }
.p-prop .body { gap: 4px; }
.p-prop .stack { flex: 1; }
.pr { display: flex; align-items: center; gap: 2px; }
.pr .combo { flex: 1; gap: 4px; }
.p-grp { width: 75px; padding-left: 5px; }
.p-grp .body { gap: 4px; }
.ic button { justify-content: center; width: 25px; }
.ic .sel { height: 24px; background: #37567a; border: 1px solid #7bc4ff; }
.p-util { width: 80px; padding-left: 7px; }
.p-util .body { gap: 8px; }
.p-clip { width: 94px; padding-left: 8px; }
.p-clip .body { gap: 8px; }
.p-clip .name { margin-left: -8px; }
.p-clip .rows button { gap: 5px; }
.p-view { padding-left: 13px; }
.p-view .name { margin-left: -10px; }

/* work area */
.work { display: flex; flex: 1; min-height: 0; padding: 4px 5px 4px 2px; background: var(--bar); }
.tree { display: flex; flex-direction: column; width: 76px; margin: 1px 4px 4px 0; }
.tree h2 { display: flex; align-items: center; gap: 7px; height: 29px; padding: 0 0 4px 6px; background: #2e3440; border-radius: 5px 5px 0 0; }
.tree ul { flex: 1; padding-top: 3px; overflow: hidden; background: #f0f0f0; color: #111; border-radius: 0 0 2px 2px; font-size: 13px; line-height: 18px; }
.tree li { display: flex; align-items: center; gap: 15px; padding-left: 8px; white-space: nowrap; }
.tree li::before { content: ""; border: 5px solid transparent; border-left-color: #2b5f93; border-right-width: 0; }
.grip { width: 5px; height: 14px; background: radial-gradient(#aab0b9 1px, transparent 1px) 0 0 / 3px 3px; }
.grip.h { width: 14px; height: 5px; margin: 2px 0 1px 4px; }
.vbar { display: flex; flex-direction: column; align-self: flex-start; width: 28px; border: 1px solid var(--dark); padding-bottom: 1px; }
.vbar button { height: 25px; }
.vbar.left { margin-right: 4px; }
.vbar.right { margin-left: 4px; }

/* drawing canvas */
.canvas { position: relative; flex: 1; min-width: 0; overflow: hidden; background: #000; }
.vp { padding: 6px 3px; font-size: 13px; }
.mdi { position: absolute; top: 10px; right: 12px; display: flex; gap: 10px; }
.mdi svg { width: 12px; height: 12px; }
.cross { position: absolute; left: 862px; top: 154px; width: 130px; height: 130px; }
.cube { position: absolute; right: 26px; top: 51px; width: 132px; height: 132px; }
.cube > svg { width: 132px; height: 132px; }
.cube span { position: absolute; color: #a8a8a8; font: 20px/24px "Noto Sans CJK SC", sans-serif; }
.cube .n { left: 56px; top: -8px; }
.cube .s { left: 56px; top: 118px; }
.cube .w { left: -6px; top: 55px; }
.cube .e { right: -6px; top: 55px; }
.face { position: absolute; left: 37px; top: 37px; display: grid; place-items: center; width: 58px; height: 58px; background: #a2a2a2; border: 1px solid #777; }
.face b { width: 36px; height: 36px; background: #939b9e; color: #454b50; font: 34px/34px "Noto Sans CJK SC", sans-serif; text-align: center; }
.ucsname { position: absolute; right: 61px; top: 212px; gap: 6px; width: 61px; height: 19px; background: #8f8f9b; border: 1px solid #62626c; border-radius: 4px; color: #55555f; line-height: 14px; }
.ucsname svg { width: 9px; height: 6px; }
.navbar { position: absolute; right: 3px; top: 258px; background: #454545; border: 1px solid #505050; border-radius: 4px; }
.navbar svg { width: 32px; height: 226px; }
.ucs { position: absolute; left: 18px; bottom: 17px; width: 62px; height: 62px; }
.ucs svg { width: 62px; height: 62px; }
.ucs span { position: absolute; font: 300 21px/22px "Open Sans", sans-serif; }
.uy { left: 7px; top: -22px; }
.ux { left: 64px; bottom: 4px; }

/* floating palette */
.insight { position: absolute; left: 1121px; top: 142px; display: flex; width: 391px; height: 557px; padding: 3px 2px 2px 0; background: #2e3542; border: 1px solid var(--dark); border-radius: 3px; }
.side { display: flex; flex-direction: column; align-items: center; gap: 9px; width: 25px; padding: 2px 0 1px; }
.side button svg { width: 12px; height: 12px; }
.side h2 { margin: auto 0 0; writing-mode: vertical-rl; text-orientation: sideways; rotate: 180deg; color: #d4d7dc; }
.pane { flex: 1; background: #465062; border: 1px solid #252c38; border-radius: 3px; }

/* command line */
.cmd { position: absolute; left: 349px; bottom: 0; width: 1043px; }
.cmd p { width: fit-content; height: 18px; margin: 0 0 4px 70px; padding: 0 2px; background: #141414; border-radius: 3px; color: #3a3a3a; font: 14px/18px "Liberation Mono", "Noto Sans CJK SC", monospace; }
.cmd p:nth-of-type(3) { margin-bottom: 2px; }
.cmdline { display: flex; align-items: center; gap: 9px; height: 29px; padding: 1px 0 1px 8px; background: #232833; border-radius: 3px; }
.cmdline > i { height: 20px; border-left: 1px dashed #888; }
.s12 { width: 12px; height: 12px; margin-right: 4px; }
.cmdline label { display: flex; flex: 1; align-items: center; gap: 2px; height: 27px; margin-left: -7px; padding: 0 4px; background: #b0b0b0; border-radius: 3px; }
.cmdline input { flex: 1; height: 25px; padding: 0 8px; font-size: 14px; color: #333; }
.cmdline input::placeholder { color: #555; font-style: italic; opacity: 1; }
.dk { width: 9px; height: 6px; }

/* status bar */
.status { display: flex; height: 35px; padding-right: 5px; }
.menu { width: 55px; height: 26px; }
.layouts { display: flex; align-items: center; height: 26px; margin-left: -8px; }
.layouts a { padding: 0 12px 0 6px; }
.layouts .on { margin-right: 1px; padding: 5px 18px 5px 19px; background: var(--bar); font-weight: 700; clip-path: polygon(16% 0, 100% 0, 84% 100%, 0 100%); }
.layouts > i { width: 1px; height: 18px; margin: 0 4px; background: #596273; transform: skewX(-20deg); }
.layouts button { padding: 0 8px 0 6px; }
.cells { display: flex; gap: 1px; height: 27px; margin: 2px 0 0 auto; }
.cell { display: flex; align-items: center; background: var(--bar); }
.gap { margin-left: 2px; }
.cell button { width: 26px; height: 27px; }
.cell .on { background: var(--active); }
.cell .ar { width: 18px; }
.ar svg { width: 9px; height: 6px; }
.cell .txt { gap: 5px; width: auto; padding: 0 5px; }
.cell .scale { padding: 0 4px 0 2px; }
.cell svg.sm { width: 9px; height: 6px; }
.coords { justify-content: flex-end; width: 155px; padding-right: 5px; }
.cell.model .txt { padding: 0 3px; }
.units { gap: 10px; width: 107px; padding: 0 6px 0 4px; }
.units select { flex: 1; }
.stub { width: 3px; }

/* floating toolbars */
.tbar { position: absolute; display: flex; align-items: center; height: 27px; padding-left: 3px; background: var(--bar); border: 1px solid var(--dark); }
.tbar .grip { margin-right: 1px; }
.tbar button { width: 26px; }
.tbar .sep { width: 2px; height: 22px; margin: 0 2px; background: #7b828d; border-right: 1px solid #222; }
.tbar .cl { align-self: flex-start; width: 9px; margin-top: 3px; }
.cl svg { width: 7px; height: 8px; }
.t1 { left: 51px; top: 77px; }
.t2 { left: 64px; top: 107px; }
.t3 { left: 87px; top: 151px; }
.t4 { left: 95px; top: 280px; }
.t5 { left: 87px; top: 310px; }

.watermark { position: absolute; inset: 0; width: 100%; height: 100%; pointer-events: none; }
.wm-text { font: italic 700 22px "Liberation Mono", monospace; fill: none; stroke: #808080; stroke-opacity: .05; stroke-width: 2px; }
```
